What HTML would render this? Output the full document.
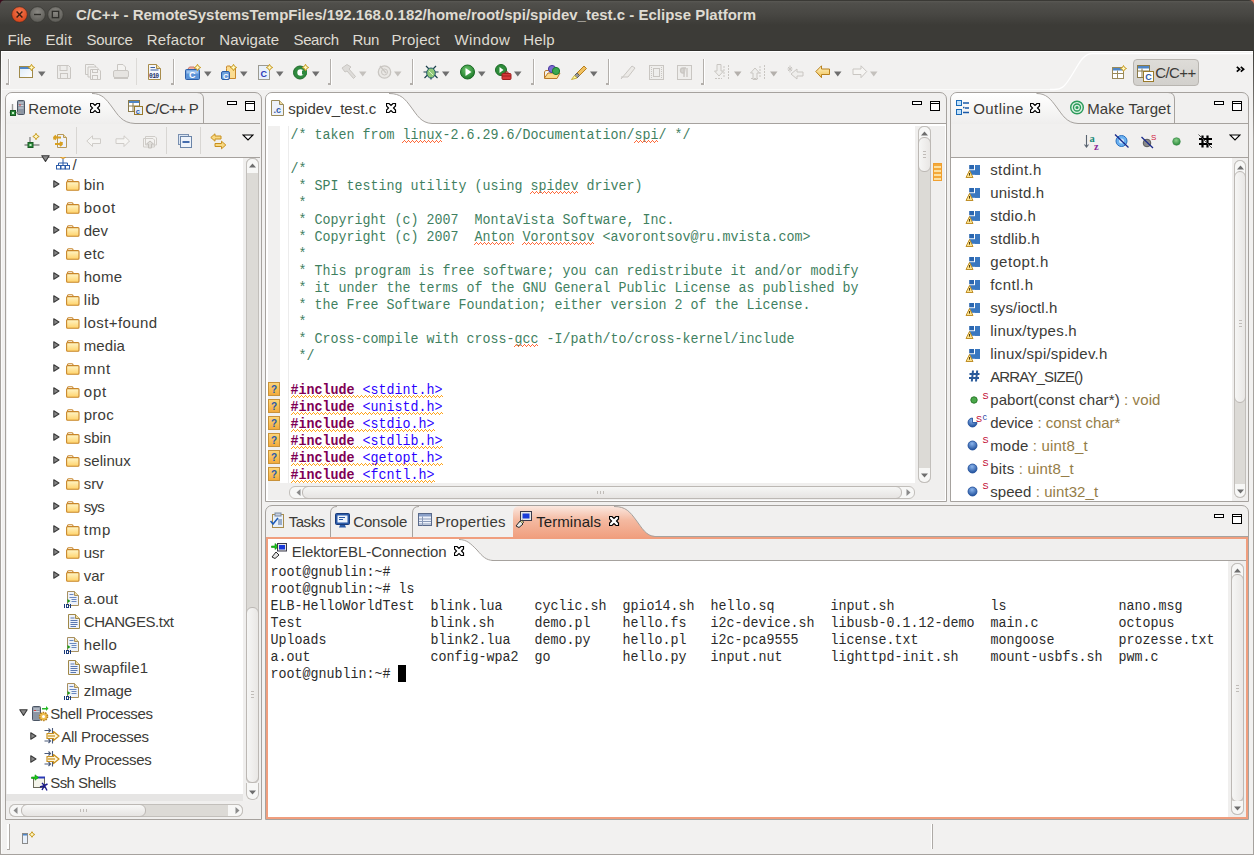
<!DOCTYPE html><html><head><meta charset="utf-8"><style>
*{margin:0;padding:0;box-sizing:border-box}
html,body{width:1254px;height:855px;overflow:hidden;background:#f2f1f0;font-family:"Liberation Sans",sans-serif;}
.t{position:absolute;white-space:pre;line-height:18px;font-size:15px;color:#3c3b37}
.m{position:absolute;white-space:pre;font-family:"Liberation Mono",monospace;font-size:13.33px;line-height:17px;transform:scaleY(1.1);transform-origin:0 12px}
</style></head><body><div style="position:absolute;left:0px;top:0px;width:8px;height:8px;background:#3a0c1c"></div>
<div style="position:absolute;left:1246px;top:0px;width:8px;height:8px;background:#e07a5e"></div>
<div style="position:absolute;left:0px;top:0px;width:1254px;height:25px;background:linear-gradient(#3a3935 0,#3a3935 1px,#5a5954 1px,#504f4b 3px,#484743 14px,#3c3b37 25px);border-radius:5px 5px 0 0"></div>
<div style="position:absolute;left:0px;top:25px;width:1254px;height:26px;background:#3c3b37"></div>
<div style="position:absolute;left:0px;top:50px;width:1254px;height:1px;background:#302f2c"></div>
<svg style="position:absolute;left:11px;top:6px;" width="18" height="18" viewBox="0 0 18 18"><defs><radialGradient id="rc" cx="50%" cy="35%" r="60%"><stop offset="0" stop-color="#f57a52"/><stop offset="1" stop-color="#d8461c"/></radialGradient></defs><circle cx="8.5" cy="8.5" r="7.8" fill="url(#rc)" stroke="#3a2a22" stroke-width="0.6"/><path d="M5.6 5.6L11.4 11.4M11.4 5.6L5.6 11.4" stroke="#3c1e10" stroke-width="1.4"/></svg>
<svg style="position:absolute;left:29px;top:6px;" width="18" height="18" viewBox="0 0 18 18"><defs><radialGradient id="gc" cx="50%" cy="35%" r="60%"><stop offset="0" stop-color="#8a8883"/><stop offset="1" stop-color="#5e5d58"/></radialGradient></defs><circle cx="8.5" cy="8.5" r="7.8" fill="url(#gc)" stroke="#33322e" stroke-width="0.6"/><path d="M5 8.5H12" stroke="#2f2e2a" stroke-width="1.4"/></svg>
<svg style="position:absolute;left:47px;top:6px;" width="18" height="18" viewBox="0 0 18 18"><circle cx="8.5" cy="8.5" r="7.8" fill="url(#gc)" stroke="#33322e" stroke-width="0.6"/><rect x="5.3" y="5.3" width="6.4" height="6.4" fill="none" stroke="#2f2e2a" stroke-width="1.3"/></svg>
<div class="t" style="left:76px;top:6px;font-weight:bold;color:#dfdbd2;font-size:15px">C/C++ - RemoteSystemsTempFiles/192.168.0.182/home/root/spi/spidev_test.c - Eclipse Platform</div>
<div class="t" style="left:7.6000000000000005px;top:31px;letter-spacing:-0.102px;color:#dfdbd2">File</div>
<div class="t" style="left:45.400000000000006px;top:31px;letter-spacing:0.188px;color:#dfdbd2">Edit</div>
<div class="t" style="left:86.5px;top:31px;letter-spacing:-0.242px;color:#dfdbd2">Source</div>
<div class="t" style="left:146.79999999999998px;top:31px;letter-spacing:0.199px;color:#dfdbd2">Refactor</div>
<div class="t" style="left:219.29999999999998px;top:31px;letter-spacing:0.076px;color:#dfdbd2">Navigate</div>
<div class="t" style="left:293.59999999999997px;top:31px;letter-spacing:-0.414px;color:#dfdbd2">Search</div>
<div class="t" style="left:352.59999999999997px;top:31px;letter-spacing:-0.349px;color:#dfdbd2">Run</div>
<div class="t" style="left:391.59999999999997px;top:31px;letter-spacing:0.217px;color:#dfdbd2">Project</div>
<div class="t" style="left:454.59999999999997px;top:31px;letter-spacing:0.370px;color:#dfdbd2">Window</div>
<div class="t" style="left:523.2px;top:31px;letter-spacing:0.152px;color:#dfdbd2">Help</div>
<div style="position:absolute;left:5px;top:92px;width:257px;height:728px;border:1px solid #a6a29e;border-radius:7px 7px 0 0;background:#f1f0ef"></div>
<svg style="position:absolute;left:6px;top:93px;" width="200" height="31" viewBox="0 0 200 31"><defs><linearGradient id="tabg" x1="0" y1="0" x2="0" y2="1"><stop offset="0" stop-color="#ffffff"/><stop offset="1" stop-color="#efeeed"/></linearGradient></defs><path d="M0 31 V7 Q0 0 7 0 H86 C96 0 100 6 106 14 C112 22 116 30 129 30 V31 Z" fill="url(#tabg)"/><path d="M86 0.5 C96 0.5 100 6 106 14 C112 22 116 30 129 30.5 H200" fill="none" stroke="#a6a29e" stroke-width="1"/></svg>
<svg style="position:absolute;left:193px;top:92px;" width="11" height="31" viewBox="0 0 11 31"><path d="M10.5 31 V7 Q10.5 0.5 4 0.5" fill="none" stroke="#a6a29e"/></svg>
<div style="position:absolute;left:200px;top:123px;width:60px;height:1px;background:#a6a29e"></div>
<div class="t" style="left:28.2px;top:99.7px;letter-spacing:0.154px;">Remote</div>
<div class="t" style="left:145.2px;top:99.7px;letter-spacing:-0.652px;">C/C++ P</div>
<div style="position:absolute;left:227px;top:101px;width:10px;height:4px;border:1.5px solid #000;background:#fff;border-radius:0"></div>
<div style="position:absolute;left:245px;top:101px;width:10px;height:10px;border:1.5px solid #000;background:#fff"></div>
<div style="position:absolute;left:246px;top:103.3px;width:8px;height:1.2px;background:#000"></div>
<div style="position:absolute;left:6px;top:157px;width:254px;height:1px;background:#a6a29e"></div>
<div style="position:absolute;left:7px;top:158px;width:236px;height:636px;background:#fff"></div>
<div style="position:absolute;left:243px;top:158px;width:16px;height:636px;background:#f0efee"></div>
<div style="position:absolute;left:246px;top:158px;width:13px;height:626px;background:#dcdad6;border:1px solid #c2bfbb;border-radius:6px"></div>
<div style="position:absolute;left:246px;top:158px;width:13px;height:15px;background:#f7f7f6;border:1px solid #c2bfbb;border-radius:6px 6px 0 0;border-bottom:none"></div>
<div style="position:absolute;left:246px;top:607px;width:13px;height:176px;background:linear-gradient(90deg,#f6f6f5,#e9e7e5);border:1px solid #bcb8b4;border-radius:6px"></div>
<div style="position:absolute;left:246px;top:783px;width:13px;height:17px;background:#f7f7f6;border:1px solid #c2bfbb;border-radius:0 0 6px 6px;border-top:none"></div>
<div style="position:absolute;left:6px;top:794px;width:237px;height:7px;background:#e6e5e4"></div>
<div style="position:absolute;left:6px;top:801px;width:254px;height:18px;background:#f0efee"></div>
<div style="position:absolute;left:9px;top:804px;width:234px;height:13px;background:#dcdad6;border:1px solid #c2bfbb;border-radius:6px"></div>
<div style="position:absolute;left:9px;top:804px;width:14px;height:13px;background:#f7f7f6;border:1px solid #c2bfbb;border-right:none;border-radius:6px 0 0 6px"></div>
<div style="position:absolute;left:228px;top:804px;width:15px;height:13px;background:#f7f7f6;border:1px solid #c2bfbb;border-left:none;border-radius:0 6px 6px 0"></div>
<div style="position:absolute;left:21px;top:804px;width:125px;height:13px;background:linear-gradient(#f8f8f7,#e6e4e2);border:1px solid #bcb8b4;border-radius:6px"></div>
<svg style="position:absolute;left:53px;top:180px;" width="7" height="8" viewBox="0 0 7 8"><path d="M0.8 0.8 L6 4 L0.8 7.2Z" fill="#8a8a8a" stroke="#3a3a3a" stroke-width="1.1" stroke-linejoin="round"/></svg>
<div class="t" style="left:83.7px;top:176px;letter-spacing:0.323px;">bin</div>
<svg style="position:absolute;left:53px;top:203px;" width="7" height="8" viewBox="0 0 7 8"><path d="M0.8 0.8 L6 4 L0.8 7.2Z" fill="#8a8a8a" stroke="#3a3a3a" stroke-width="1.1" stroke-linejoin="round"/></svg>
<div class="t" style="left:83.7px;top:199px;letter-spacing:0.758px;">boot</div>
<svg style="position:absolute;left:53px;top:226px;" width="7" height="8" viewBox="0 0 7 8"><path d="M0.8 0.8 L6 4 L0.8 7.2Z" fill="#8a8a8a" stroke="#3a3a3a" stroke-width="1.1" stroke-linejoin="round"/></svg>
<div class="t" style="left:83.7px;top:222px;letter-spacing:0.062px;">dev</div>
<svg style="position:absolute;left:53px;top:249px;" width="7" height="8" viewBox="0 0 7 8"><path d="M0.8 0.8 L6 4 L0.8 7.2Z" fill="#8a8a8a" stroke="#3a3a3a" stroke-width="1.1" stroke-linejoin="round"/></svg>
<div class="t" style="left:83.7px;top:245px;letter-spacing:0.365px;">etc</div>
<svg style="position:absolute;left:53px;top:272px;" width="7" height="8" viewBox="0 0 7 8"><path d="M0.8 0.8 L6 4 L0.8 7.2Z" fill="#8a8a8a" stroke="#3a3a3a" stroke-width="1.1" stroke-linejoin="round"/></svg>
<div class="t" style="left:83.7px;top:268px;letter-spacing:0.258px;">home</div>
<svg style="position:absolute;left:53px;top:295px;" width="7" height="8" viewBox="0 0 7 8"><path d="M0.8 0.8 L6 4 L0.8 7.2Z" fill="#8a8a8a" stroke="#3a3a3a" stroke-width="1.1" stroke-linejoin="round"/></svg>
<div class="t" style="left:83.7px;top:291px;letter-spacing:0.453px;">lib</div>
<svg style="position:absolute;left:53px;top:318px;" width="7" height="8" viewBox="0 0 7 8"><path d="M0.8 0.8 L6 4 L0.8 7.2Z" fill="#8a8a8a" stroke="#3a3a3a" stroke-width="1.1" stroke-linejoin="round"/></svg>
<div class="t" style="left:83.7px;top:314px;letter-spacing:0.431px;">lost+found</div>
<svg style="position:absolute;left:53px;top:341px;" width="7" height="8" viewBox="0 0 7 8"><path d="M0.8 0.8 L6 4 L0.8 7.2Z" fill="#8a8a8a" stroke="#3a3a3a" stroke-width="1.1" stroke-linejoin="round"/></svg>
<div class="t" style="left:83.7px;top:337px;letter-spacing:0.097px;">media</div>
<svg style="position:absolute;left:53px;top:364px;" width="7" height="8" viewBox="0 0 7 8"><path d="M0.8 0.8 L6 4 L0.8 7.2Z" fill="#8a8a8a" stroke="#3a3a3a" stroke-width="1.1" stroke-linejoin="round"/></svg>
<div class="t" style="left:83.7px;top:360px;letter-spacing:0.792px;">mnt</div>
<svg style="position:absolute;left:53px;top:387px;" width="7" height="8" viewBox="0 0 7 8"><path d="M0.8 0.8 L6 4 L0.8 7.2Z" fill="#8a8a8a" stroke="#3a3a3a" stroke-width="1.1" stroke-linejoin="round"/></svg>
<div class="t" style="left:83.7px;top:383px;letter-spacing:0.865px;">opt</div>
<svg style="position:absolute;left:53px;top:410px;" width="7" height="8" viewBox="0 0 7 8"><path d="M0.8 0.8 L6 4 L0.8 7.2Z" fill="#8a8a8a" stroke="#3a3a3a" stroke-width="1.1" stroke-linejoin="round"/></svg>
<div class="t" style="left:83.7px;top:406px;letter-spacing:0.254px;">proc</div>
<svg style="position:absolute;left:53px;top:433px;" width="7" height="8" viewBox="0 0 7 8"><path d="M0.8 0.8 L6 4 L0.8 7.2Z" fill="#8a8a8a" stroke="#3a3a3a" stroke-width="1.1" stroke-linejoin="round"/></svg>
<div class="t" style="left:83.7px;top:429px;letter-spacing:-0.004px;">sbin</div>
<svg style="position:absolute;left:53px;top:456px;" width="7" height="8" viewBox="0 0 7 8"><path d="M0.8 0.8 L6 4 L0.8 7.2Z" fill="#8a8a8a" stroke="#3a3a3a" stroke-width="1.1" stroke-linejoin="round"/></svg>
<div class="t" style="left:83.7px;top:452px;letter-spacing:0.056px;">selinux</div>
<svg style="position:absolute;left:53px;top:479px;" width="7" height="8" viewBox="0 0 7 8"><path d="M0.8 0.8 L6 4 L0.8 7.2Z" fill="#8a8a8a" stroke="#3a3a3a" stroke-width="1.1" stroke-linejoin="round"/></svg>
<div class="t" style="left:83.7px;top:475px;letter-spacing:-0.052px;">srv</div>
<svg style="position:absolute;left:53px;top:502px;" width="7" height="8" viewBox="0 0 7 8"><path d="M0.8 0.8 L6 4 L0.8 7.2Z" fill="#8a8a8a" stroke="#3a3a3a" stroke-width="1.1" stroke-linejoin="round"/></svg>
<div class="t" style="left:83.7px;top:498px;letter-spacing:-0.745px;">sys</div>
<svg style="position:absolute;left:53px;top:525px;" width="7" height="8" viewBox="0 0 7 8"><path d="M0.8 0.8 L6 4 L0.8 7.2Z" fill="#8a8a8a" stroke="#3a3a3a" stroke-width="1.1" stroke-linejoin="round"/></svg>
<div class="t" style="left:83.7px;top:521px;letter-spacing:0.865px;">tmp</div>
<svg style="position:absolute;left:53px;top:548px;" width="7" height="8" viewBox="0 0 7 8"><path d="M0.8 0.8 L6 4 L0.8 7.2Z" fill="#8a8a8a" stroke="#3a3a3a" stroke-width="1.1" stroke-linejoin="round"/></svg>
<div class="t" style="left:83.7px;top:544px;letter-spacing:-0.026px;">usr</div>
<svg style="position:absolute;left:53px;top:571px;" width="7" height="8" viewBox="0 0 7 8"><path d="M0.8 0.8 L6 4 L0.8 7.2Z" fill="#8a8a8a" stroke="#3a3a3a" stroke-width="1.1" stroke-linejoin="round"/></svg>
<div class="t" style="left:83.7px;top:567px;letter-spacing:-0.052px;">var</div>
<div class="t" style="left:83.7px;top:590px;letter-spacing:0.241px;">a.out</div>
<div class="t" style="left:83.7px;top:613px;letter-spacing:-0.395px;">CHANGES.txt</div>
<div class="t" style="left:83.7px;top:636px;letter-spacing:0.362px;">hello</div>
<div class="t" style="left:83.7px;top:659px;letter-spacing:0.236px;">swapfile1</div>
<div class="t" style="left:83.7px;top:682px;letter-spacing:-0.151px;">zImage</div>
<div class="t" style="left:50.2px;top:705px;letter-spacing:-0.339px;">Shell Processes</div>
<svg style="position:absolute;left:30px;top:732px;" width="7" height="8" viewBox="0 0 7 8"><path d="M0.8 0.8 L6 4 L0.8 7.2Z" fill="#8a8a8a" stroke="#3a3a3a" stroke-width="1.1" stroke-linejoin="round"/></svg>
<div class="t" style="left:61.2px;top:728px;letter-spacing:-0.257px;">All Processes</div>
<svg style="position:absolute;left:30px;top:755px;" width="7" height="8" viewBox="0 0 7 8"><path d="M0.8 0.8 L6 4 L0.8 7.2Z" fill="#8a8a8a" stroke="#3a3a3a" stroke-width="1.1" stroke-linejoin="round"/></svg>
<div class="t" style="left:61.2px;top:751px;letter-spacing:-0.337px;">My Processes</div>
<div class="t" style="left:50.2px;top:774px;letter-spacing:-0.539px;">Ssh Shells</div>
<svg style="position:absolute;left:41px;top:155px;" width="9" height="8" viewBox="0 0 9 8"><path d="M0.8 0.8 H8.2 L4.5 6.5Z" fill="#8a8a8a" stroke="#3a3a3a" stroke-width="1.1" stroke-linejoin="round"/></svg>
<div class="t" style="left:72.5px;top:156px;">/</div>
<div style="position:absolute;left:265px;top:92px;width:682px;height:410px;border:1px solid #a6a29e;border-radius:7px 7px 0 0;background:#f1f0ef"></div>
<svg style="position:absolute;left:266px;top:93px;" width="170" height="31" viewBox="0 0 170 31"><path d="M0 31 V7 Q0 0 7 0 H123 C135 0 139 6 145 14 C151 22 155 30 166 30 V31 Z" fill="#fff"/><path d="M123 0.5 C135 0.5 139 6 145 14 C151 22 155 30 166 30.5 H170" fill="none" stroke="#a6a29e" stroke-width="1"/></svg>
<div style="position:absolute;left:432px;top:123px;width:514px;height:1px;background:#a6a29e"></div>
<div class="t" style="left:288.2px;top:99.5px;letter-spacing:0.035px;">spidev_test.c</div>
<div style="position:absolute;left:912px;top:101px;width:10px;height:4px;border:1.5px solid #000;background:#fff;border-radius:0"></div>
<div style="position:absolute;left:930px;top:101px;width:10px;height:10px;border:1.5px solid #000;background:#fff"></div>
<div style="position:absolute;left:931px;top:103.3px;width:8px;height:1.2px;background:#000"></div>
<div style="position:absolute;left:266px;top:124px;width:680px;height:377px;background:#fff"></div>
<div style="position:absolute;left:915px;top:126px;width:30px;height:374px;background:#f0efee"></div>
<div style="position:absolute;left:268px;top:483px;width:647px;height:17px;background:#f0efee"></div>
<div style="position:absolute;left:268px;top:126px;width:12px;height:357px;background:#f1f0ef"></div>
<div style="position:absolute;left:288px;top:126px;width:1px;height:357px;background:#ececec"></div>
<div style="position:absolute;left:918px;top:126px;width:13px;height:357px;background:#dcdad6;border:1px solid #c2bfbb;border-radius:6px"></div>
<div style="position:absolute;left:918px;top:126px;width:13px;height:14px;background:#f7f7f6;border:1px solid #c2bfbb;border-radius:6px 6px 0 0;border-bottom:none"></div>
<div style="position:absolute;left:918px;top:137px;width:13px;height:35px;background:linear-gradient(90deg,#f6f6f5,#e9e7e5);border:1px solid #bcb8b4;border-radius:6px"></div>
<div style="position:absolute;left:918px;top:468px;width:13px;height:15px;background:#f7f7f6;border:1px solid #c2bfbb;border-radius:0 0 6px 6px;border-top:none"></div>
<div style="position:absolute;left:933px;top:163px;width:9px;height:18px;background:repeating-linear-gradient(#f4a93a 0 2px,#fde0a0 2px 4px);border:1px solid #f0a030"></div>
<div style="position:absolute;left:289px;top:486px;width:626px;height:13px;background:#f7f7f6;border:1px solid #c2bfbb;border-radius:6px"></div>
<div style="position:absolute;left:302px;top:486px;width:600px;height:13px;background:linear-gradient(#f6f6f5,#e6e4e2);border:1px solid #bcb8b4;border-radius:6px"></div>
<div style="position:absolute;left:950px;top:92px;width:299px;height:410px;border:1px solid #a6a29e;border-radius:7px 7px 0 0;background:#f1f0ef"></div>
<svg style="position:absolute;left:951px;top:93px;" width="150" height="31" viewBox="0 0 150 31"><path d="M0 31 V7 Q0 0 7 0 H85.5 C95.5 0 99.5 6 105.5 14 C111.5 22 115.5 30 127 30 V31 Z" fill="url(#tabg)"/><path d="M85.5 0.5 C95.5 0.5 99.5 6 105.5 14 C111.5 22 115.5 30 127 30.5 H150" fill="none" stroke="#a6a29e" stroke-width="1"/></svg>
<div style="position:absolute;left:1101px;top:123px;width:147px;height:1px;background:#a6a29e"></div>
<svg style="position:absolute;left:1164px;top:92px;" width="11" height="31" viewBox="0 0 11 31"><path d="M10.5 31 V7 Q10.5 0.5 4 0.5" fill="none" stroke="#a6a29e"/></svg>
<div class="t" style="left:973.2px;top:99.7px;letter-spacing:0.426px;">Outline</div>
<div class="t" style="left:1087.2px;top:99.7px;letter-spacing:0.129px;">Make Target</div>
<div style="position:absolute;left:1214px;top:101px;width:10px;height:4px;border:1.5px solid #000;background:#fff;border-radius:0"></div>
<div style="position:absolute;left:1232px;top:101px;width:10px;height:10px;border:1.5px solid #000;background:#fff"></div>
<div style="position:absolute;left:1233px;top:103.3px;width:8px;height:1.2px;background:#000"></div>
<div style="position:absolute;left:951px;top:157px;width:297px;height:1px;background:#a6a29e"></div>
<div style="position:absolute;left:951px;top:158px;width:281px;height:343px;background:#fff"></div>
<div style="position:absolute;left:1232px;top:158px;width:16px;height:343px;background:#f0efee"></div>
<div style="position:absolute;left:1234px;top:160px;width:12px;height:338px;background:#dcdad6;border:1px solid #c2bfbb;border-radius:6px"></div>
<div style="position:absolute;left:1234px;top:160px;width:12px;height:14px;background:#f7f7f6;border:1px solid #c2bfbb;border-radius:6px 6px 0 0;border-bottom:none"></div>
<div style="position:absolute;left:1234px;top:171px;width:12px;height:232px;background:linear-gradient(90deg,#f6f6f5,#e9e7e5);border:1px solid #bcb8b4;border-radius:6px"></div>
<div style="position:absolute;left:1234px;top:484px;width:12px;height:14px;background:#f7f7f6;border:1px solid #c2bfbb;border-radius:0 0 6px 6px;border-top:none"></div>
<div class="t" style="left:990.2px;top:160.5px;letter-spacing:0.414px;">stdint.h</div>
<div class="t" style="left:990.2px;top:183.5px;letter-spacing:0.203px;">unistd.h</div>
<div class="t" style="left:990.2px;top:206.5px;letter-spacing:0.225px;">stdio.h</div>
<div class="t" style="left:990.2px;top:229.5px;letter-spacing:0.273px;">stdlib.h</div>
<div class="t" style="left:990.2px;top:252.5px;letter-spacing:0.553px;">getopt.h</div>
<div class="t" style="left:990.2px;top:275.5px;letter-spacing:0.475px;">fcntl.h</div>
<div class="t" style="left:990.2px;top:298.5px;letter-spacing:0.132px;">sys/ioctl.h</div>
<div class="t" style="left:990.2px;top:321.5px;letter-spacing:0.262px;">linux/types.h</div>
<div class="t" style="left:990.2px;top:344.5px;letter-spacing:0.232px;">linux/spi/spidev.h</div>
<div class="t" style="left:990.2px;top:367.5px;letter-spacing:-0.835px;">ARRAY_SIZE()</div>
<div class="t" style="left:990.2px;top:390.5px;letter-spacing:0.106px;">pabort(const char*)<span style="color:#957d47"> : void</span></div>
<div class="t" style="left:990.2px;top:413.5px;letter-spacing:-0.041px;">device<span style="color:#957d47"> : const char*</span></div>
<div class="t" style="left:990.2px;top:436.5px;letter-spacing:0.186px;">mode<span style="color:#957d47"> : uint8_t</span></div>
<div class="t" style="left:990.2px;top:459.5px;letter-spacing:0.203px;">bits<span style="color:#957d47"> : uint8_t</span></div>
<div class="t" style="left:990.2px;top:482.5px;letter-spacing:0.077px;">speed<span style="color:#957d47"> : uint32_t</span></div>
<div style="position:absolute;left:265px;top:505px;width:984px;height:315px;border:1px solid #a6a29e;border-radius:7px 7px 0 0;background:#f1f0ef"></div>
<svg style="position:absolute;left:330px;top:506px;" width="10" height="31" viewBox="0 0 10 31"><path d="M0.5 31 V7 Q0.5 0.5 7 0.5" fill="none" stroke="#a6a29e"/></svg>
<svg style="position:absolute;left:412px;top:506px;" width="10" height="31" viewBox="0 0 10 31"><path d="M0.5 31 V7 Q0.5 0.5 7 0.5" fill="none" stroke="#a6a29e"/></svg>
<div class="t" style="left:288.7px;top:512.5px;letter-spacing:-0.453px;">Tasks</div>
<div class="t" style="left:353.2px;top:512.5px;letter-spacing:-0.143px;">Console</div>
<div class="t" style="left:435.2px;top:512.5px;letter-spacing:0.212px;">Properties</div>
<svg style="position:absolute;left:513px;top:506px;" width="142" height="32" viewBox="0 0 142 32"><defs><linearGradient id="otab" x1="0" y1="0" x2="0" y2="1"><stop offset="0" stop-color="#fbe8e0"/><stop offset="0.45" stop-color="#f4b9a0"/><stop offset="1" stop-color="#f09e7e"/></linearGradient></defs><path d="M0 32 V7 Q0 0 7 0 H101 C113 0 117 6 123 14 C129 22 133 30 142 30 V32 Z" fill="url(#otab)"/><path d="M101 0.5 C113 0.5 117 6 123 14 C129 22 133 30 142 30.5" fill="none" stroke="#a6a29e"/></svg>
<div style="position:absolute;left:655px;top:536px;width:593px;height:1px;background:#a6a29e"></div>
<div class="t" style="left:536.2px;top:512.5px;letter-spacing:0.078px;color:#1e1e1e">Terminals</div>
<div style="position:absolute;left:1214px;top:514px;width:10px;height:4px;border:1.5px solid #000;background:#fff;border-radius:0"></div>
<div style="position:absolute;left:1232px;top:514px;width:10px;height:10px;border:1.5px solid #000;background:#fff"></div>
<div style="position:absolute;left:1233px;top:516.3px;width:8px;height:1.2px;background:#000"></div>
<div style="position:absolute;left:266px;top:537px;width:982px;height:282px;background:#f0efee;border:2px solid #f09e7e;border-bottom-width:2px"></div>
<svg style="position:absolute;left:268px;top:539px;" width="240" height="22" viewBox="0 0 240 22"><path d="M0 22 V0 H191 C199 0 203 5 209 11 C215 18 218 21 225 21 V22Z" fill="#fff"/><path d="M191 0.5 C199 0.5 203 5 209 11 C215 18 218 21 225 21.5 H240" fill="none" stroke="#a6a29e"/></svg>
<div style="position:absolute;left:492px;top:560px;width:754px;height:1px;background:#a6a29e"></div>
<div class="t" style="left:291.7px;top:542.5px;letter-spacing:-0.049px;">ElektorEBL-Connection</div>
<div style="position:absolute;left:268px;top:561px;width:978px;height:256px;background:#fff"></div>
<div style="position:absolute;left:1228px;top:561px;width:18px;height:256px;background:#f0efee"></div>
<div style="position:absolute;left:1231px;top:563px;width:13px;height:252px;background:#dcdad6;border:1px solid #c2bfbb;border-radius:6px"></div>
<div style="position:absolute;left:1231px;top:563px;width:13px;height:14px;background:#f7f7f6;border:1px solid #c2bfbb;border-radius:6px 6px 0 0;border-bottom:none"></div>
<div style="position:absolute;left:1231px;top:574px;width:13px;height:228px;background:linear-gradient(90deg,#f6f6f5,#e9e7e5);border:1px solid #bcb8b4;border-radius:6px"></div>
<div style="position:absolute;left:1231px;top:801px;width:13px;height:14px;background:#f7f7f6;border:1px solid #c2bfbb;border-radius:0 0 6px 6px;border-top:none"></div>
<div class="m" style="left:270.6px;top:564px;color:#2a2a2a">root@gnublin:~#</div>
<div class="m" style="left:270.6px;top:581px;color:#2a2a2a">root@gnublin:~# ls</div>
<div class="m" style="left:270.6px;top:598px;color:#2a2a2a">ELB-HelloWorldTest  blink.lua    cyclic.sh  gpio14.sh  hello.sq       input.sh            ls              nano.msg</div>
<div class="m" style="left:270.6px;top:615px;color:#2a2a2a">Test                blink.sh     demo.pl    hello.fs   i2c-device.sh  libusb-0.1.12-demo  main.c          octopus</div>
<div class="m" style="left:270.6px;top:632px;color:#2a2a2a">Uploads             blink2.lua   demo.py    hello.pl   i2c-pca9555    license.txt         mongoose        prozesse.txt</div>
<div class="m" style="left:270.6px;top:649px;color:#2a2a2a">a.out               config-wpa2  go         hello.py   input.nut      lighttpd-init.sh    mount-usbfs.sh  pwm.c</div>
<div class="m" style="left:270.6px;top:666px;color:#2a2a2a">root@gnublin:~# </div>
<div style="position:absolute;left:398px;top:665px;width:8px;height:17px;background:#000"></div>
<div style="position:absolute;left:7px;top:824px;width:2px;height:25px;background:#fff"></div>
<div style="position:absolute;left:9px;top:824px;width:1px;height:25px;background:#aeaaa6"></div>
<div style="position:absolute;left:7px;top:849px;width:3px;height:1px;background:#aeaaa6"></div>
<div style="position:absolute;left:931px;top:824px;width:1px;height:25px;background:#fff"></div>
<div style="position:absolute;left:932px;top:824px;width:1px;height:25px;background:#aeaaa6"></div>
<div class="m" style="left:290.6px;top:127px;color:#3f7f5f">/* taken from linux-2.6.29.6/Documentation/spi/ */</div>
<div class="m" style="left:290.6px;top:161px;color:#3f7f5f">/*</div>
<div class="m" style="left:290.6px;top:178px;color:#3f7f5f"> * SPI testing utility (using spidev driver)</div>
<div class="m" style="left:290.6px;top:195px;color:#3f7f5f"> *</div>
<div class="m" style="left:290.6px;top:212px;color:#3f7f5f"> * Copyright (c) 2007  MontaVista Software, Inc.</div>
<div class="m" style="left:290.6px;top:229px;color:#3f7f5f"> * Copyright (c) 2007  Anton Vorontsov &lt;avorontsov@ru.mvista.com&gt;</div>
<div class="m" style="left:290.6px;top:246px;color:#3f7f5f"> *</div>
<div class="m" style="left:290.6px;top:263px;color:#3f7f5f"> * This program is free software; you can redistribute it and/or modify</div>
<div class="m" style="left:290.6px;top:280px;color:#3f7f5f"> * it under the terms of the GNU General Public License as published by</div>
<div class="m" style="left:290.6px;top:297px;color:#3f7f5f"> * the Free Software Foundation; either version 2 of the License.</div>
<div class="m" style="left:290.6px;top:314px;color:#3f7f5f"> *</div>
<div class="m" style="left:290.6px;top:331px;color:#3f7f5f"> * Cross-compile with cross-gcc -I/path/to/cross-kernel/include</div>
<div class="m" style="left:290.6px;top:348px;color:#3f7f5f"> */</div>
<div class="m" style="left:290.6px;top:382px;color:#2a00ff"><b style="color:#7f0055">#include</b> &lt;stdint.h&gt;</div>
<svg style="position:absolute;left:291px;top:395px;shape-rendering:crispEdges" width="152" height="3" viewBox="0 0 152 3"><defs><pattern id="sq1" width="4" height="3" patternUnits="userSpaceOnUse"><rect x="0" y="2" width="1" height="1" fill="#ffa318"/><rect x="1" y="1" width="1" height="1" fill="#ffa318"/><rect x="2" y="0" width="1" height="1" fill="#ffa318"/><rect x="3" y="1" width="1" height="1" fill="#ffa318"/></pattern></defs><rect width="152" height="3" fill="url(#sq1)"/></svg>
<div class="m" style="left:290.6px;top:399px;color:#2a00ff"><b style="color:#7f0055">#include</b> &lt;unistd.h&gt;</div>
<svg style="position:absolute;left:291px;top:412px;shape-rendering:crispEdges" width="152" height="3" viewBox="0 0 152 3"><defs><pattern id="sq2" width="4" height="3" patternUnits="userSpaceOnUse"><rect x="0" y="2" width="1" height="1" fill="#ffa318"/><rect x="1" y="1" width="1" height="1" fill="#ffa318"/><rect x="2" y="0" width="1" height="1" fill="#ffa318"/><rect x="3" y="1" width="1" height="1" fill="#ffa318"/></pattern></defs><rect width="152" height="3" fill="url(#sq2)"/></svg>
<div class="m" style="left:290.6px;top:416px;color:#2a00ff"><b style="color:#7f0055">#include</b> &lt;stdio.h&gt;</div>
<svg style="position:absolute;left:291px;top:429px;shape-rendering:crispEdges" width="144" height="3" viewBox="0 0 144 3"><defs><pattern id="sq3" width="4" height="3" patternUnits="userSpaceOnUse"><rect x="0" y="2" width="1" height="1" fill="#ffa318"/><rect x="1" y="1" width="1" height="1" fill="#ffa318"/><rect x="2" y="0" width="1" height="1" fill="#ffa318"/><rect x="3" y="1" width="1" height="1" fill="#ffa318"/></pattern></defs><rect width="144" height="3" fill="url(#sq3)"/></svg>
<div class="m" style="left:290.6px;top:433px;color:#2a00ff"><b style="color:#7f0055">#include</b> &lt;stdlib.h&gt;</div>
<svg style="position:absolute;left:291px;top:446px;shape-rendering:crispEdges" width="152" height="3" viewBox="0 0 152 3"><defs><pattern id="sq4" width="4" height="3" patternUnits="userSpaceOnUse"><rect x="0" y="2" width="1" height="1" fill="#ffa318"/><rect x="1" y="1" width="1" height="1" fill="#ffa318"/><rect x="2" y="0" width="1" height="1" fill="#ffa318"/><rect x="3" y="1" width="1" height="1" fill="#ffa318"/></pattern></defs><rect width="152" height="3" fill="url(#sq4)"/></svg>
<div class="m" style="left:290.6px;top:450px;color:#2a00ff"><b style="color:#7f0055">#include</b> &lt;getopt.h&gt;</div>
<svg style="position:absolute;left:291px;top:463px;shape-rendering:crispEdges" width="152" height="3" viewBox="0 0 152 3"><defs><pattern id="sq5" width="4" height="3" patternUnits="userSpaceOnUse"><rect x="0" y="2" width="1" height="1" fill="#ffa318"/><rect x="1" y="1" width="1" height="1" fill="#ffa318"/><rect x="2" y="0" width="1" height="1" fill="#ffa318"/><rect x="3" y="1" width="1" height="1" fill="#ffa318"/></pattern></defs><rect width="152" height="3" fill="url(#sq5)"/></svg>
<div class="m" style="left:290.6px;top:467px;color:#2a00ff"><b style="color:#7f0055">#include</b> &lt;fcntl.h&gt;</div>
<svg style="position:absolute;left:291px;top:480px;shape-rendering:crispEdges" width="144" height="3" viewBox="0 0 144 3"><defs><pattern id="sq6" width="4" height="3" patternUnits="userSpaceOnUse"><rect x="0" y="2" width="1" height="1" fill="#ffa318"/><rect x="1" y="1" width="1" height="1" fill="#ffa318"/><rect x="2" y="0" width="1" height="1" fill="#ffa318"/><rect x="3" y="1" width="1" height="1" fill="#ffa318"/></pattern></defs><rect width="144" height="3" fill="url(#sq6)"/></svg>
<svg style="position:absolute;left:402px;top:140px;shape-rendering:crispEdges" width="40" height="3" viewBox="0 0 40 3"><defs><pattern id="sq7" width="4" height="3" patternUnits="userSpaceOnUse"><rect x="0" y="2" width="1" height="1" fill="#ff6a3a"/><rect x="1" y="1" width="1" height="1" fill="#ff6a3a"/><rect x="2" y="0" width="1" height="1" fill="#ff6a3a"/><rect x="3" y="1" width="1" height="1" fill="#ff6a3a"/></pattern></defs><rect width="40" height="3" fill="url(#sq7)"/></svg>
<svg style="position:absolute;left:634px;top:140px;shape-rendering:crispEdges" width="24" height="3" viewBox="0 0 24 3"><defs><pattern id="sq8" width="4" height="3" patternUnits="userSpaceOnUse"><rect x="0" y="2" width="1" height="1" fill="#ff6a3a"/><rect x="1" y="1" width="1" height="1" fill="#ff6a3a"/><rect x="2" y="0" width="1" height="1" fill="#ff6a3a"/><rect x="3" y="1" width="1" height="1" fill="#ff6a3a"/></pattern></defs><rect width="24" height="3" fill="url(#sq8)"/></svg>
<svg style="position:absolute;left:530px;top:191px;shape-rendering:crispEdges" width="48" height="3" viewBox="0 0 48 3"><defs><pattern id="sq9" width="4" height="3" patternUnits="userSpaceOnUse"><rect x="0" y="2" width="1" height="1" fill="#ff6a3a"/><rect x="1" y="1" width="1" height="1" fill="#ff6a3a"/><rect x="2" y="0" width="1" height="1" fill="#ff6a3a"/><rect x="3" y="1" width="1" height="1" fill="#ff6a3a"/></pattern></defs><rect width="48" height="3" fill="url(#sq9)"/></svg>
<svg style="position:absolute;left:474px;top:242px;shape-rendering:crispEdges" width="40" height="3" viewBox="0 0 40 3"><defs><pattern id="sq10" width="4" height="3" patternUnits="userSpaceOnUse"><rect x="0" y="2" width="1" height="1" fill="#ff6a3a"/><rect x="1" y="1" width="1" height="1" fill="#ff6a3a"/><rect x="2" y="0" width="1" height="1" fill="#ff6a3a"/><rect x="3" y="1" width="1" height="1" fill="#ff6a3a"/></pattern></defs><rect width="40" height="3" fill="url(#sq10)"/></svg>
<svg style="position:absolute;left:522px;top:242px;shape-rendering:crispEdges" width="72" height="3" viewBox="0 0 72 3"><defs><pattern id="sq11" width="4" height="3" patternUnits="userSpaceOnUse"><rect x="0" y="2" width="1" height="1" fill="#ff6a3a"/><rect x="1" y="1" width="1" height="1" fill="#ff6a3a"/><rect x="2" y="0" width="1" height="1" fill="#ff6a3a"/><rect x="3" y="1" width="1" height="1" fill="#ff6a3a"/></pattern></defs><rect width="72" height="3" fill="url(#sq11)"/></svg>
<svg style="position:absolute;left:514px;top:344px;shape-rendering:crispEdges" width="24" height="3" viewBox="0 0 24 3"><defs><pattern id="sq12" width="4" height="3" patternUnits="userSpaceOnUse"><rect x="0" y="2" width="1" height="1" fill="#ff6a3a"/><rect x="1" y="1" width="1" height="1" fill="#ff6a3a"/><rect x="2" y="0" width="1" height="1" fill="#ff6a3a"/><rect x="3" y="1" width="1" height="1" fill="#ff6a3a"/></pattern></defs><rect width="24" height="3" fill="url(#sq12)"/></svg>
<svg style="position:absolute;left:268px;top:382px;" width="12" height="14" viewBox="0 0 12 14"><defs><linearGradient id="qm" x1="0" y1="0" x2="0" y2="1"><stop offset="0" stop-color="#fcd67a"/><stop offset="1" stop-color="#f2a93a"/></linearGradient></defs><rect x="0.5" y="0.5" width="11" height="13" fill="url(#qm)" stroke="#c8923a"/><text x="3" y="11" font-family="Liberation Sans" font-size="10" font-weight="bold" fill="#2a5aa8">?</text></svg>
<svg style="position:absolute;left:268px;top:399px;" width="12" height="14" viewBox="0 0 12 14"><defs><linearGradient id="qm" x1="0" y1="0" x2="0" y2="1"><stop offset="0" stop-color="#fcd67a"/><stop offset="1" stop-color="#f2a93a"/></linearGradient></defs><rect x="0.5" y="0.5" width="11" height="13" fill="url(#qm)" stroke="#c8923a"/><text x="3" y="11" font-family="Liberation Sans" font-size="10" font-weight="bold" fill="#2a5aa8">?</text></svg>
<svg style="position:absolute;left:268px;top:416px;" width="12" height="14" viewBox="0 0 12 14"><defs><linearGradient id="qm" x1="0" y1="0" x2="0" y2="1"><stop offset="0" stop-color="#fcd67a"/><stop offset="1" stop-color="#f2a93a"/></linearGradient></defs><rect x="0.5" y="0.5" width="11" height="13" fill="url(#qm)" stroke="#c8923a"/><text x="3" y="11" font-family="Liberation Sans" font-size="10" font-weight="bold" fill="#2a5aa8">?</text></svg>
<svg style="position:absolute;left:268px;top:433px;" width="12" height="14" viewBox="0 0 12 14"><defs><linearGradient id="qm" x1="0" y1="0" x2="0" y2="1"><stop offset="0" stop-color="#fcd67a"/><stop offset="1" stop-color="#f2a93a"/></linearGradient></defs><rect x="0.5" y="0.5" width="11" height="13" fill="url(#qm)" stroke="#c8923a"/><text x="3" y="11" font-family="Liberation Sans" font-size="10" font-weight="bold" fill="#2a5aa8">?</text></svg>
<svg style="position:absolute;left:268px;top:450px;" width="12" height="14" viewBox="0 0 12 14"><defs><linearGradient id="qm" x1="0" y1="0" x2="0" y2="1"><stop offset="0" stop-color="#fcd67a"/><stop offset="1" stop-color="#f2a93a"/></linearGradient></defs><rect x="0.5" y="0.5" width="11" height="13" fill="url(#qm)" stroke="#c8923a"/><text x="3" y="11" font-family="Liberation Sans" font-size="10" font-weight="bold" fill="#2a5aa8">?</text></svg>
<svg style="position:absolute;left:268px;top:467px;" width="12" height="14" viewBox="0 0 12 14"><defs><linearGradient id="qm" x1="0" y1="0" x2="0" y2="1"><stop offset="0" stop-color="#fcd67a"/><stop offset="1" stop-color="#f2a93a"/></linearGradient></defs><rect x="0.5" y="0.5" width="11" height="13" fill="url(#qm)" stroke="#c8923a"/><text x="3" y="11" font-family="Liberation Sans" font-size="10" font-weight="bold" fill="#2a5aa8">?</text></svg>
<div style="position:absolute;left:8px;top:59px;width:2px;height:26px;background:#b3afab;border-right:1px solid #fff"></div>
<div style="position:absolute;left:6px;top:83px;width:3px;height:2px;background:#b3afab"></div>
<svg style="position:absolute;left:19px;top:64px;" width="16" height="16" viewBox="0 0 16 16"><defs><linearGradient id="nw" x1="0" y1="0" x2="1" y2="1"><stop offset="0" stop-color="#dbeaf8"/><stop offset="1" stop-color="#ffffff"/></linearGradient></defs><rect x="0.5" y="2.5" width="13" height="11" fill="url(#nw)" stroke="#a08a4a"/><rect x="1" y="3" width="12" height="2" fill="#4f86c6"/><path d="M12.5 0.2999999999999998 L13.62 2.38 L15.7 3.5 L13.62 4.62 L12.5 6.7 L11.38 4.62 L9.3 3.5 L11.38 2.38Z" fill="#fff8c0" stroke="#c89a20" stroke-width="1"/></svg>
<svg style="position:absolute;left:38px;top:71px;" width="8" height="6" viewBox="0 0 8 6"><path d="M0 0.5 H7.5 L3.75 5.5Z" fill="#6e6e6e"/></svg>
<svg style="position:absolute;left:56px;top:64px;" width="16" height="16" viewBox="0 0 16 16"><path d="M1.5 1.5 H12.5 L14.5 3.5 V14.5 H1.5Z" fill="#eeedeb" stroke="#c9c6c2"/><rect x="4" y="1.5" width="7" height="5" fill="none" stroke="#c9c6c2"/><rect x="4.5" y="9.5" width="7" height="5" fill="none" stroke="#c9c6c2"/></svg>
<svg style="position:absolute;left:85px;top:64px;" width="16" height="16" viewBox="0 0 16 16"><path d="M0.5 0.5 H9 L10.5 2 V10.5 H0.5Z" fill="#f2f1ef" stroke="#c9c6c2"/><path d="M3.0 3.0 H11.5 L13.0 4.5 V13.0 H3.0Z" fill="#f2f1ef" stroke="#c9c6c2"/><path d="M5.5 5.5 H14 L15.5 7 V15.5 H5.5Z" fill="#f2f1ef" stroke="#c9c6c2"/><rect x="7.5" y="5.5" width="5" height="3" fill="none" stroke="#c9c6c2"/><rect x="7.5" y="11.5" width="5" height="4" fill="none" stroke="#c9c6c2"/></svg>
<svg style="position:absolute;left:113px;top:64px;" width="16" height="16" viewBox="0 0 16 16"><path d="M4.5 0.5 H10 L12.5 3 V7.5 H4.5Z" fill="#f4f3f1" stroke="#c9c6c2"/><rect x="0.5" y="6.5" width="15" height="7" rx="1.5" fill="#e6e4e1" stroke="#c9c6c2"/><rect x="1" y="13" width="14" height="2" fill="#c9c6c2"/></svg>
<div style="position:absolute;left:136px;top:58px;width:1px;height:27px;background:#dcdad7"></div>
<svg style="position:absolute;left:147px;top:64px;" width="16" height="16" viewBox="0 0 16 16"><path d="M1.5 0.5 H9.5 L13.5 4.5 V15.5 H1.5Z" fill="#f4f6fb" stroke="#a88c4c"/><path d="M9.5 0.5 V4.5 H13.5" fill="#f3dea0" stroke="#a88c4c"/><path d="M3.5 3.5 H8 M3.5 6 H11.5" stroke="#3a5fa0" stroke-width="1.1"/><text x="2" y="14" font-family="Liberation Mono" font-size="6.3" font-weight="bold" fill="#1a2f6a" letter-spacing="-0.6">010</text></svg>
<div style="position:absolute;left:173px;top:59px;width:2px;height:26px;background:#b3afab;border-right:1px solid #fff"></div>
<div style="position:absolute;left:171px;top:83px;width:3px;height:2px;background:#b3afab"></div>
<svg style="position:absolute;left:185px;top:64px;" width="17" height="16" viewBox="0 0 17 16"><path d="M3 5 L4.5 3 H9 L10 5" fill="#f4b0a0" stroke="#c8786a"/><rect x="0.5" y="5.5" width="14" height="10" rx="1" fill="#5d94d8" stroke="#2c5ea8"/><rect x="1.5" y="6.5" width="12" height="3" fill="#9cc2ee"/><text x="4" y="14.2" font-family="Liberation Sans" font-size="9" font-weight="bold" fill="#fff">C</text><path d="M12.5 0.2999999999999998 L13.62 2.38 L15.7 3.5 L13.62 4.62 L12.5 6.7 L11.38 4.62 L9.3 3.5 L11.38 2.38Z" fill="#fff8c0" stroke="#c89a20" stroke-width="1"/></svg>
<svg style="position:absolute;left:204px;top:71px;" width="8" height="6" viewBox="0 0 8 6"><path d="M0 0.5 H7.5 L3.75 5.5Z" fill="#6e6e6e"/></svg>
<svg style="position:absolute;left:221px;top:64px;" width="17" height="16" viewBox="0 0 17 16"><path d="M5.5 4.5 V3 Q5.5 2 6.5 2 H9 L10 3.5 H14.5 V14.5 H5.5Z" fill="#fbdc90" stroke="#c8862a"/><rect x="0.5" y="7.5" width="8" height="8" rx="1.5" fill="#6fa0dc" stroke="#2c5ea8"/><text x="2" y="14.5" font-family="Liberation Sans" font-size="7.5" font-weight="bold" fill="#fff">C</text><path d="M12.5 0.2999999999999998 L13.62 2.38 L15.7 3.5 L13.62 4.62 L12.5 6.7 L11.38 4.62 L9.3 3.5 L11.38 2.38Z" fill="#fff8c0" stroke="#c89a20" stroke-width="1"/></svg>
<svg style="position:absolute;left:240px;top:71px;" width="8" height="6" viewBox="0 0 8 6"><path d="M0 0.5 H7.5 L3.75 5.5Z" fill="#6e6e6e"/></svg>
<svg style="position:absolute;left:258px;top:64px;" width="16" height="16" viewBox="0 0 16 16"><rect x="0.5" y="1.5" width="11" height="14" fill="#e8f0fa" stroke="#9c9a90"/><text x="2.5" y="12.5" font-family="Liberation Sans" font-size="9" font-weight="bold" fill="#2838b8">C</text><path d="M11.5 0.2999999999999998 L12.62 2.38 L14.7 3.5 L12.62 4.62 L11.5 6.7 L10.38 4.62 L8.3 3.5 L10.38 2.38Z" fill="#fff8c0" stroke="#c89a20" stroke-width="1"/></svg>
<svg style="position:absolute;left:276px;top:71px;" width="8" height="6" viewBox="0 0 8 6"><path d="M0 0.5 H7.5 L3.75 5.5Z" fill="#6e6e6e"/></svg>
<svg style="position:absolute;left:293px;top:64px;" width="17" height="16" viewBox="0 0 17 16"><circle cx="7" cy="8.5" r="6.5" fill="#2f8a3e" stroke="#1f6a2a"/><circle cx="7.5" cy="8.5" r="3.2" fill="#fff"/><rect x="9" y="6.5" width="5" height="4" fill="#2f8a3e"/><path d="M12.5 0.2999999999999998 L13.62 2.38 L15.7 3.5 L13.62 4.62 L12.5 6.7 L11.38 4.62 L9.3 3.5 L11.38 2.38Z" fill="#fff8c0" stroke="#c89a20" stroke-width="1"/></svg>
<svg style="position:absolute;left:312px;top:71px;" width="8" height="6" viewBox="0 0 8 6"><path d="M0 0.5 H7.5 L3.75 5.5Z" fill="#6e6e6e"/></svg>
<div style="position:absolute;left:330px;top:59px;width:2px;height:26px;background:#b3afab;border-right:1px solid #fff"></div>
<div style="position:absolute;left:328px;top:83px;width:3px;height:2px;background:#b3afab"></div>
<svg style="position:absolute;left:341px;top:64px;" width="16" height="16" viewBox="0 0 16 16"><path d="M1 4 L6 0.5 L10 3 L8 5 L14.5 12.5 L12.5 14.5 L6 7 L4 8Z" fill="#dedcd9" stroke="#c9c6c2"/></svg>
<svg style="position:absolute;left:359px;top:71px;" width="8" height="6" viewBox="0 0 8 6"><path d="M0 0.5 H7.5 L3.75 5.5Z" fill="#c4c1bd"/></svg>
<svg style="position:absolute;left:377px;top:64px;" width="16" height="16" viewBox="0 0 16 16"><circle cx="7.5" cy="8" r="6.2" fill="#eae8e5" stroke="#c9c6c2" stroke-width="1.3"/><circle cx="7.5" cy="8" r="3" fill="none" stroke="#c9c6c2"/><path d="M3 2 L9 9" stroke="#c9c6c2" stroke-width="1.3"/></svg>
<svg style="position:absolute;left:394px;top:71px;" width="8" height="6" viewBox="0 0 8 6"><path d="M0 0.5 H7.5 L3.75 5.5Z" fill="#c4c1bd"/></svg>
<div style="position:absolute;left:412px;top:59px;width:2px;height:26px;background:#b3afab;border-right:1px solid #fff"></div>
<div style="position:absolute;left:410px;top:83px;width:3px;height:2px;background:#b3afab"></div>
<svg style="position:absolute;left:423px;top:64px;" width="16" height="16" viewBox="0 0 16 16"><path d="M3 2 L6 5 M13 2 L10 5 M0.5 8 H4 M15.5 8 H12 M1.5 14 L4.5 11 M14.5 14 L11.5 11 M8 15.5 V12" stroke="#1a3e4a" stroke-width="1.2"/><ellipse cx="8" cy="9" rx="4.3" ry="5" fill="#8fc878" stroke="#1f5a6a"/><path d="M6 7 L10 11" stroke="#d8f0c8"/></svg>
<svg style="position:absolute;left:442px;top:71px;" width="8" height="6" viewBox="0 0 8 6"><path d="M0 0.5 H7.5 L3.75 5.5Z" fill="#6e6e6e"/></svg>
<svg style="position:absolute;left:460px;top:64px;" width="16" height="16" viewBox="0 0 16 16"><defs><radialGradient id="rg" cx="45%" cy="35%" r="65%"><stop offset="0" stop-color="#6cc66c"/><stop offset="1" stop-color="#1e7a2a"/></radialGradient></defs><circle cx="7.5" cy="8" r="7" fill="url(#rg)" stroke="#1a6a24"/><path d="M5.5 4 V12 L11.5 8Z" fill="#fff"/></svg>
<svg style="position:absolute;left:478px;top:71px;" width="8" height="6" viewBox="0 0 8 6"><path d="M0 0.5 H7.5 L3.75 5.5Z" fill="#6e6e6e"/></svg>
<svg style="position:absolute;left:495px;top:64px;" width="17" height="16" viewBox="0 0 17 16"><circle cx="6" cy="6" r="5.5" fill="#2e8c3a" stroke="#1a6a24"/><path d="M4.5 3 V9 L8.5 6Z" fill="#fff"/><rect x="7" y="9.5" width="9" height="6" rx="1" fill="#d83a3a" stroke="#a02020"/><path d="M10 9.5 V8 H13 V9.5 M7 12 H16" stroke="#a02020" fill="none"/></svg>
<svg style="position:absolute;left:514px;top:71px;" width="8" height="6" viewBox="0 0 8 6"><path d="M0 0.5 H7.5 L3.75 5.5Z" fill="#6e6e6e"/></svg>
<div style="position:absolute;left:533px;top:59px;width:2px;height:26px;background:#b3afab;border-right:1px solid #fff"></div>
<div style="position:absolute;left:531px;top:83px;width:3px;height:2px;background:#b3afab"></div>
<svg style="position:absolute;left:544px;top:64px;" width="17" height="16" viewBox="0 0 17 16"><path d="M0.5 8 V14.5 H13 L16 9 H4 L0.5 14" fill="#fbd98a" stroke="#b8782a"/><path d="M0.5 8 L1.5 6.5 H5 L6 8 H12" fill="none" stroke="#b8782a"/><circle cx="8" cy="5" r="3.6" fill="#7a6ad0" stroke="#4a3aa0"/><circle cx="12" cy="7" r="3.6" fill="#3aa850" stroke="#1a7a30"/></svg>
<svg style="position:absolute;left:571px;top:64px;" width="17" height="16" viewBox="0 0 17 16"><path d="M6 9 L13 2 L15.5 4.5 L8.5 11.5Z" fill="#f0c060" stroke="#b88020"/><path d="M3.5 11.5 L6 9 L8.5 11.5 L6 14Z" fill="#9a9a9a" stroke="#606060"/><path d="M0.5 15.5 L3.5 11.5 L6 14Z" fill="#fffaa0" stroke="#c8b040"/></svg>
<svg style="position:absolute;left:590px;top:71px;" width="8" height="6" viewBox="0 0 8 6"><path d="M0 0.5 H7.5 L3.75 5.5Z" fill="#6e6e6e"/></svg>
<div style="position:absolute;left:608px;top:59px;width:2px;height:26px;background:#b3afab;border-right:1px solid #fff"></div>
<div style="position:absolute;left:606px;top:83px;width:3px;height:2px;background:#b3afab"></div>
<svg style="position:absolute;left:620px;top:64px;" width="16" height="16" viewBox="0 0 16 16"><path d="M1 15 L12 2 L15 4 L8 13 H1" fill="#eceae7" stroke="#c9c6c2"/></svg>
<svg style="position:absolute;left:649px;top:64px;" width="16" height="16" viewBox="0 0 16 16"><rect x="0.5" y="1.5" width="14" height="14" fill="#efeeec" stroke="#c9c6c2"/><rect x="4.5" y="4.5" width="6" height="8" fill="none" stroke="#c9c6c2"/><path d="M2.5 3 V14 M12.5 3 V14" stroke="#c9c6c2" stroke-dasharray="1 1"/></svg>
<svg style="position:absolute;left:677px;top:64px;" width="16" height="16" viewBox="0 0 16 16"><rect x="0.5" y="1.5" width="14" height="14" fill="#efeeec" stroke="#c9c6c2"/><path d="M9 4 H6 Q3.5 4 3.5 6.5 Q3.5 9 6 9 H7 V13 M7 4 V13 M10 4 V13" fill="#d5d3d0" stroke="#c9c6c2" stroke-width="1.3"/></svg>
<div style="position:absolute;left:703px;top:59px;width:2px;height:26px;background:#b3afab;border-right:1px solid #fff"></div>
<div style="position:absolute;left:701px;top:83px;width:3px;height:2px;background:#b3afab"></div>
<svg style="position:absolute;left:714px;top:64px;" width="16" height="16" viewBox="0 0 16 16"><path d="M3 0.5 H7 V7 H9.5 L5 12 L0.5 7 H3Z" fill="#efeeec" stroke="#c9c6c2"/><path d="M9 3 H12 M9 6 H12 M9 9 H12 M9 12 H12 M14.5 1 V15 M1 14.5 H8" stroke="#c9c6c2" stroke-dasharray="2 1"/></svg>
<svg style="position:absolute;left:734px;top:71px;" width="8" height="6" viewBox="0 0 8 6"><path d="M0 0.5 H7.5 L3.75 5.5Z" fill="#b4b0ac"/></svg>
<svg style="position:absolute;left:750px;top:64px;" width="16" height="16" viewBox="0 0 16 16"><path d="M3 15.5 H7 V9 H9.5 L5 4 L0.5 9 H3Z" fill="#efeeec" stroke="#c9c6c2"/><path d="M9 3 H12 M9 6 H12 M9 9 H12 M9 12 H12 M14.5 1 V15 M1 14.5 H8" stroke="#c9c6c2" stroke-dasharray="2 1"/></svg>
<svg style="position:absolute;left:770px;top:71px;" width="8" height="6" viewBox="0 0 8 6"><path d="M0 0.5 H7.5 L3.75 5.5Z" fill="#b4b0ac"/></svg>
<svg style="position:absolute;left:787px;top:64px;" width="17" height="16" viewBox="0 0 17 16"><path d="M1 3 L5 7 M5 3 L1 7 M3 1.5 V8.5 M0.5 5 H5.5" stroke="#c9c6c2"/><path d="M16 8 V12 H10 V15 L4 10 L10 5 V8Z" fill="#efeeec" stroke="#c9c6c2"/></svg>
<svg style="position:absolute;left:815px;top:65px;" width="16" height="14" viewBox="0 0 16 14"><defs><linearGradient id="bk" x1="0" y1="0" x2="0" y2="1"><stop offset="0" stop-color="#fff4c8"/><stop offset="1" stop-color="#f0c050"/></linearGradient></defs><path d="M0.8 6.5 L6.5 0.8 V4 H14.5 V9.5 H6.5 V12.7Z" fill="url(#bk)" stroke="#b8801e" stroke-linejoin="round"/></svg>
<svg style="position:absolute;left:834px;top:71px;" width="8" height="6" viewBox="0 0 8 6"><path d="M0 0.5 H7.5 L3.75 5.5Z" fill="#6e6e6e"/></svg>
<svg style="position:absolute;left:852px;top:65px;" width="16" height="14" viewBox="0 0 16 14"><path d="M14.7 6.5 L9 0.8 V4 H1 V9.5 H9 V12.7Z" fill="#f6f5f3" stroke="#c9c6c2" stroke-linejoin="round"/></svg>
<svg style="position:absolute;left:870px;top:71px;" width="8" height="6" viewBox="0 0 8 6"><path d="M0 0.5 H7.5 L3.75 5.5Z" fill="#c4c1bd"/></svg>
<div style="position:absolute;left:1px;top:89px;width:1053px;height:1px;background:#fafaf9"></div>
<svg style="position:absolute;left:1050px;top:52px;" width="204" height="40" viewBox="0 0 204 40"><path d="M0 37.5 H4 C12 37.5 15 34 20 26 C26 17 29 10 33 6 C36 3 38 1.5 42 1.5 H204" fill="none" stroke="#ffffff" stroke-width="1.3"/></svg>
<svg style="position:absolute;left:1112px;top:65px;" width="15" height="15" viewBox="0 0 15 15"><rect x="0.5" y="2.5" width="11" height="11" fill="#fff" stroke="#9a8a5a"/><rect x="1" y="3" width="10" height="2.5" fill="#4f86c6"/><path d="M0.5 8.5 H11.5 M5.5 5.5 V13.5" stroke="#9a8a5a"/><path d="M11.5 0.5 L12.55 2.45 L14.5 3.5 L12.55 4.55 L11.5 6.5 L10.45 4.55 L8.5 3.5 L10.45 2.45Z" fill="#fff8c0" stroke="#c89a20" stroke-width="1"/></svg>
<div style="position:absolute;left:1133px;top:59px;width:66px;height:27px;background:linear-gradient(#dedcd8,#d2d0cc);border:1px solid #b8b5b0;border-radius:4px"></div>
<svg style="position:absolute;left:1137px;top:65px;" width="18" height="17" viewBox="0 0 18 17"><rect x="0.5" y="0.5" width="12" height="12" fill="#fff" stroke="#8a7a4a"/><rect x="1" y="1" width="11" height="2.5" fill="#4f86c6"/><path d="M0.5 6 H12 M5 3.5 V12.5" stroke="#8a7a4a"/><rect x="6.5" y="6.5" width="10" height="10" fill="#fff" stroke="#9a7a2a"/><text x="8.3" y="15.3" font-family="Liberation Sans" font-size="9" font-weight="bold" fill="#2e5aa8">C</text></svg>
<div class="t" style="left:1155.2px;top:64px;letter-spacing:-0.559px;font-size:15px">C/C++</div>
<svg style="position:absolute;left:1236px;top:65.5px;" width="9" height="7" viewBox="0 0 9 7"><path d="M0.8 0.8 L3.6 3.2 L0.8 5.6 M4.8 0.8 L7.6 3.2 L4.8 5.6" fill="none" stroke="#000" stroke-width="1.7"/></svg>
<svg style="position:absolute;left:9px;top:100px;" width="17" height="16" viewBox="0 0 17 16"><rect x="8.5" y="0.5" width="7" height="14" rx="1" fill="#8c96a4" stroke="#4c5664"/><path d="M9.5 3 H14.5 M9.5 5.5 H14.5 M9.5 8 H14.5" stroke="#d0d6de"/><rect x="10" y="4.5" width="2" height="1" fill="#d84040"/><path d="M3.5 4 V12 M0.5 12.5 H12" stroke="#9a9a9a" stroke-width="1.4"/><rect x="1.5" y="10.5" width="5" height="5" fill="#2a8a3a" stroke="#1a5a24"/><rect x="3" y="12" width="2" height="2" fill="#c8f0c8"/></svg>
<svg style="position:absolute;left:90px;top:103px;" width="11" height="11" viewBox="0 0 11 11"><path d="M0.5 0.5 H3 L5 2.5 L7 0.5 H9.5 V3 L7.5 5 L9.5 7 V9.5 H7 L5 7.5 L3 9.5 H0.5 V7 L2.5 5 L0.5 3 Z" fill="#fff" stroke="#000" stroke-width="1.2"/></svg>
<svg style="position:absolute;left:128px;top:100px;" width="16" height="16" viewBox="0 0 16 16"><rect x="0.5" y="0.5" width="11" height="11" fill="#fff" stroke="#8a7a4a"/><rect x="1" y="1" width="10" height="2" fill="#4f86c6"/><path d="M0.5 6 H11 M5 3 V11.5" stroke="#8a7a4a"/><rect x="6.5" y="6.5" width="8" height="8" fill="#e8f0fa" stroke="#9a7a2a"/><text x="7.8" y="13.6" font-family="Liberation Sans" font-size="7.5" font-weight="bold" fill="#2e5aa8">c</text></svg>
<div style="position:absolute;left:227px;top:101px;width:10px;height:4px;border:1.5px solid #000;background:#fff;border-radius:0"></div>
<div style="position:absolute;left:245px;top:101px;width:10px;height:10px;border:1.5px solid #000;background:#fff"></div>
<div style="position:absolute;left:246px;top:103.3px;width:8px;height:1.2px;background:#000"></div>
<svg style="position:absolute;left:24px;top:133px;" width="17" height="15" viewBox="0 0 17 15"><path d="M6 4 V13 M0.5 12 H15.5" stroke="#8a8a8a" stroke-width="1.4"/><rect x="4" y="9.5" width="5" height="5" fill="#2a8a3a" stroke="#1a5a24"/><rect x="5.5" y="11" width="2" height="2" fill="#c8f0c8"/><path d="M12 0.2999999999999998 L13.12 2.38 L15.2 3.5 L13.12 4.62 L12 6.7 L10.88 4.62 L8.8 3.5 L10.88 2.38Z" fill="#fff8c0" stroke="#c89a20" stroke-width="1"/></svg>
<svg style="position:absolute;left:52px;top:133px;" width="16" height="16" viewBox="0 0 16 16"><path d="M5.5 1.5 H11.5 L14.5 4.5 V14.5 H5.5Z" fill="#eef2fa" stroke="#b89a5a"/><path d="M11.5 1.5 V4.5 H14.5" fill="#f0dca0" stroke="#b89a5a"/><path d="M9 4.5 H4.5 Q2 4.5 2 6.5 M4 2.5 L2 4.5 L4 6.5" fill="none" stroke="#d8a020" stroke-width="1.8" stroke-linejoin="round"/><path d="M3 11 H7.5 Q10 11 10 9 M8 13 L10 11 L8 9" fill="none" stroke="#d8a020" stroke-width="1.8" stroke-linejoin="round"/></svg>
<div style="position:absolute;left:76px;top:127px;width:1px;height:27px;background:#d8d6d3"></div>
<svg style="position:absolute;left:86px;top:135px;" width="16" height="13" viewBox="0 0 16 13"><path d="M0.8 6 L6.5 0.8 V3.8 H14.5 V8.5 H6.5 V11.5Z" fill="#f6f5f3" stroke="#cfccc8" stroke-linejoin="round"/></svg>
<svg style="position:absolute;left:115px;top:135px;" width="16" height="13" viewBox="0 0 16 13"><path d="M14.5 6 L9 0.8 V3.8 H1 V8.5 H9 V11.5Z" fill="#f6f5f3" stroke="#cfccc8" stroke-linejoin="round"/></svg>
<svg style="position:absolute;left:143px;top:134px;" width="15" height="15" viewBox="0 0 15 15"><path d="M2.5 2.5 H12 L13.5 4 V11 H2.5Z M0.5 4.5 H10 L11.5 6 V13 H0.5Z" fill="#f3f2f0" stroke="#cfccc8"/><path d="M7 7 L10.5 10 H8.5 V14 H5.5 V10 H3.5Z" fill="#e0deda" stroke="#c4c1bd"/></svg>
<div style="position:absolute;left:166px;top:127px;width:1px;height:27px;background:#d8d6d3"></div>
<svg style="position:absolute;left:178px;top:134px;" width="14" height="15" viewBox="0 0 14 15"><rect x="0.5" y="0.5" width="10" height="10" fill="#dbe6f4" stroke="#7a90b0"/><rect x="2.5" y="2.5" width="11" height="11" fill="#eef3fa" stroke="#6a84a8"/><path d="M4.5 8 H11.5" stroke="#1a4a9a" stroke-width="1.6"/></svg>
<div style="position:absolute;left:200px;top:127px;width:1px;height:27px;background:#d8d6d3"></div>
<svg style="position:absolute;left:210px;top:133px;" width="17" height="17" viewBox="0 0 17 17"><path d="M0.8 4.5 L5 0.8 V3 H11 V6 H5 V8.2Z" fill="#f8d880" stroke="#c8901e" stroke-linejoin="round"/><path d="M15.8 12 L11.5 8.2 V10.5 H5 V13.5 H11.5 V15.8Z" fill="#f8d880" stroke="#c8901e" stroke-linejoin="round"/></svg>
<svg style="position:absolute;left:241.5px;top:133.5px;" width="12" height="7" viewBox="0 0 12 7"><path d="M1 1 H11 L6 6Z" fill="#fff" stroke="#000" stroke-width="1.1" stroke-linejoin="miter"/></svg>
<svg style="position:absolute;left:271px;top:100px;" width="13" height="16" viewBox="0 0 13 16"><path d="M0.5 0.5 H8.5 L12.5 4.5 V15.5 H0.5Z" fill="#eef2fa" stroke="#9a8a5a"/><path d="M8.5 0.5 V4.5 H12.5" fill="#f0dca0" stroke="#9a8a5a"/><text x="2.5" y="13" font-family="Liberation Sans" font-size="9" font-weight="bold" fill="#2e5aa8">.c</text></svg>
<svg style="position:absolute;left:386px;top:103px;" width="11" height="11" viewBox="0 0 11 11"><path d="M0.5 0.5 H3 L5 2.5 L7 0.5 H9.5 V3 L7.5 5 L9.5 7 V9.5 H7 L5 7.5 L3 9.5 H0.5 V7 L2.5 5 L0.5 3 Z" fill="#fff" stroke="#000" stroke-width="1.2"/></svg>
<svg style="position:absolute;left:956px;top:100px;" width="14" height="15" viewBox="0 0 14 15"><rect x="0.5" y="0.5" width="5" height="5" fill="#bfe0fa" stroke="#1a6ab8"/><rect x="0.5" y="9.5" width="5" height="5" fill="#bfe0fa" stroke="#1a6ab8"/><path d="M7 3 H13 M9 8 H13 M7 12.5 H13" stroke="#1a5aa8" stroke-width="1.3"/><rect x="7" y="6.8" width="1.5" height="1.5" fill="#1a5aa8"/></svg>
<svg style="position:absolute;left:1030px;top:103px;" width="11" height="11" viewBox="0 0 11 11"><path d="M0.5 0.5 H3 L5 2.5 L7 0.5 H9.5 V3 L7.5 5 L9.5 7 V9.5 H7 L5 7.5 L3 9.5 H0.5 V7 L2.5 5 L0.5 3 Z" fill="#fff" stroke="#000" stroke-width="1.2"/></svg>
<svg style="position:absolute;left:1070px;top:100px;" width="15" height="15" viewBox="0 0 15 15"><circle cx="7" cy="7.5" r="6.3" fill="#d8f0e0" stroke="#2a9a5a" stroke-width="1.4"/><circle cx="7" cy="7.5" r="3.5" fill="none" stroke="#2a9a5a" stroke-width="1.3"/><circle cx="7" cy="7.5" r="1.5" fill="#2a9a5a"/></svg>
<svg style="position:absolute;left:1084px;top:133px;" width="20" height="18" viewBox="0 0 20 18"><path d="M2.5 2 V14 M0.5 11.5 L2.5 14 L4.5 11.5" fill="none" stroke="#5a6470" stroke-width="1.1"/><text x="5.5" y="8.5" font-family="Liberation Serif" font-size="10.5" font-weight="bold" fill="#1a8a78">a</text><text x="10" y="16.5" font-family="Liberation Serif" font-size="10.5" font-weight="bold" fill="#8a2a9a">z</text></svg>
<svg style="position:absolute;left:1114px;top:133px;" width="16" height="16" viewBox="0 0 16 16"><circle cx="7.5" cy="8" r="5.5" fill="#6ab0f0" stroke="#2a70c0"/><circle cx="7.5" cy="8" r="2.5" fill="#cfe8fc"/><path d="M1 1.5 L14.5 14.5" stroke="#1a2a8a" stroke-width="1.3"/></svg>
<svg style="position:absolute;left:1141px;top:133px;" width="16" height="16" viewBox="0 0 16 16"><circle cx="6" cy="10" r="3.8" fill="#8a8a8a" stroke="#5a5a5a"/><path d="M0.5 4 L12 15" stroke="#1a2a8a" stroke-width="1.3"/><text x="10" y="7" font-family="Liberation Sans" font-size="8" fill="#d01840">S</text></svg>
<svg style="position:absolute;left:1172px;top:137px;" width="9" height="9" viewBox="0 0 9 9"><defs><radialGradient id="gd" cx="45%" cy="35%" r="65%"><stop offset="0" stop-color="#8ad08a"/><stop offset="1" stop-color="#2a8a3a"/></radialGradient></defs><circle cx="4.5" cy="4.5" r="3.8" fill="url(#gd)" stroke="#3a8a4a" stroke-width="0.6"/></svg>
<svg style="position:absolute;left:1198px;top:134px;" width="15" height="15" viewBox="0 0 15 15"><path d="M4.5 1.5 V13.5 M9.5 1.5 V13.5 M1 5 H14 M1 10 H14" stroke="#000" stroke-width="2.2"/><path d="M0.5 0.5 L14 14" stroke="#555" stroke-width="1"/></svg>
<svg style="position:absolute;left:1229px;top:133.5px;" width="12" height="7" viewBox="0 0 12 7"><path d="M1 1 H11 L6 6Z" fill="#fff" stroke="#000" stroke-width="1.1" stroke-linejoin="miter"/></svg>
<div style="position:absolute;left:1214px;top:101px;width:10px;height:4px;border:1.5px solid #000;background:#fff;border-radius:0"></div>
<div style="position:absolute;left:1232px;top:101px;width:10px;height:10px;border:1.5px solid #000;background:#fff"></div>
<div style="position:absolute;left:1233px;top:103.3px;width:8px;height:1.2px;background:#000"></div>
<svg style="position:absolute;left:270px;top:512px;" width="16" height="16" viewBox="0 0 16 16"><rect x="2.5" y="2.5" width="11" height="13" fill="#e8f0fa" stroke="#a88c4c"/><rect x="5" y="1" width="6" height="3" fill="#c8d0e0" stroke="#7a8aa0"/><path d="M0.5 9 L3 12 L8 6" fill="none" stroke="#1a5ab8" stroke-width="1.5"/><path d="M8 8 H12 M8 10 H12 M8 12 H12" stroke="#4a6a9a"/></svg>
<svg style="position:absolute;left:335px;top:513px;" width="15" height="15" viewBox="0 0 15 15"><rect x="0.5" y="0.5" width="14" height="11" rx="1" fill="#2a5aa8" stroke="#1a3a78"/><rect x="2.5" y="2.5" width="10" height="7" fill="#eef4fc"/><path d="M4 4.5 H10 M4 6.5 H8" stroke="#2a5aa8"/><path d="M5 12 H10 L11 14.5 H4Z" fill="#2a5aa8"/></svg>
<svg style="position:absolute;left:418px;top:513px;" width="15" height="13" viewBox="0 0 15 13"><rect x="0.5" y="0.5" width="13" height="12" fill="#eef2fa" stroke="#5a6a8a"/><rect x="1" y="1" width="12" height="2.5" fill="#8aa0c8"/><path d="M1 6 H13 M1 8.5 H13 M1 11 H13 M4.5 3.5 V12.5" stroke="#8a9ab8"/></svg>
<svg style="position:absolute;left:515px;top:511px;" width="18" height="17" viewBox="0 0 18 17"><rect x="5.5" y="0.5" width="11" height="9" fill="#e6e6e6" stroke="#3a3a4a"/><rect x="7.5" y="2.5" width="7" height="5" fill="#1a3ad8"/><path d="M1 15 L5 10 L8 13 L4 16.5Z" fill="#e8e8e8" stroke="#2a2a2a"/><path d="M4.5 11 L7.5 9 L8.5 12" fill="#f0f0a0" stroke="#3a3a3a"/></svg>
<svg style="position:absolute;left:609px;top:516px;" width="11" height="11" viewBox="0 0 11 11"><path d="M0.5 0.5 H3 L5 2.5 L7 0.5 H9.5 V3 L7.5 5 L9.5 7 V9.5 H7 L5 7.5 L3 9.5 H0.5 V7 L2.5 5 L0.5 3 Z" fill="#fff" stroke="#000" stroke-width="1.2"/></svg>
<svg style="position:absolute;left:271px;top:542px;" width="18" height="17" viewBox="0 0 18 17"><path d="M0.5 4 H4 V1.5 L7.5 4.5 L4 7.5 V5.5 H0.5Z" fill="#18c818" stroke="#0a8a0a" stroke-width="0.6"/><rect x="6.5" y="1.5" width="9" height="7.5" fill="#e6e6e6" stroke="#3a3a4a"/><rect x="8" y="3" width="6" height="4.5" fill="#1a3ad8"/><path d="M1 15 L5 10 L8 13 L4 16.5Z" fill="#e8e8e8" stroke="#2a2a2a"/></svg>
<svg style="position:absolute;left:454px;top:546px;" width="11" height="11" viewBox="0 0 11 11"><path d="M0.5 0.5 H3 L5 2.5 L7 0.5 H9.5 V3 L7.5 5 L9.5 7 V9.5 H7 L5 7.5 L3 9.5 H0.5 V7 L2.5 5 L0.5 3 Z" fill="#fff" stroke="#000" stroke-width="1.2"/></svg>
<svg style="position:absolute;left:65.5px;top:178.5px;" width="14" height="12" viewBox="0 0 14 12"><defs><linearGradient id="fg" x1="0" y1="0" x2="0" y2="1"><stop offset="0" stop-color="#fff6c8"/><stop offset="1" stop-color="#ffd26a"/></linearGradient></defs><path d="M1.5 3 V1.8 Q1.5 0.8 2.5 0.8 H6 Q7 0.8 7 1.8 V2.5" fill="#fff" stroke="#c8862a" stroke-width="1.1"/><rect x="0.6" y="2.6" width="12.4" height="8.6" rx="1" fill="url(#fg)" stroke="#c8862a" stroke-width="1.1"/></svg>
<svg style="position:absolute;left:65.5px;top:201.5px;" width="14" height="12" viewBox="0 0 14 12"><defs><linearGradient id="fg" x1="0" y1="0" x2="0" y2="1"><stop offset="0" stop-color="#fff6c8"/><stop offset="1" stop-color="#ffd26a"/></linearGradient></defs><path d="M1.5 3 V1.8 Q1.5 0.8 2.5 0.8 H6 Q7 0.8 7 1.8 V2.5" fill="#fff" stroke="#c8862a" stroke-width="1.1"/><rect x="0.6" y="2.6" width="12.4" height="8.6" rx="1" fill="url(#fg)" stroke="#c8862a" stroke-width="1.1"/></svg>
<svg style="position:absolute;left:65.5px;top:224.5px;" width="14" height="12" viewBox="0 0 14 12"><defs><linearGradient id="fg" x1="0" y1="0" x2="0" y2="1"><stop offset="0" stop-color="#fff6c8"/><stop offset="1" stop-color="#ffd26a"/></linearGradient></defs><path d="M1.5 3 V1.8 Q1.5 0.8 2.5 0.8 H6 Q7 0.8 7 1.8 V2.5" fill="#fff" stroke="#c8862a" stroke-width="1.1"/><rect x="0.6" y="2.6" width="12.4" height="8.6" rx="1" fill="url(#fg)" stroke="#c8862a" stroke-width="1.1"/></svg>
<svg style="position:absolute;left:65.5px;top:247.5px;" width="14" height="12" viewBox="0 0 14 12"><defs><linearGradient id="fg" x1="0" y1="0" x2="0" y2="1"><stop offset="0" stop-color="#fff6c8"/><stop offset="1" stop-color="#ffd26a"/></linearGradient></defs><path d="M1.5 3 V1.8 Q1.5 0.8 2.5 0.8 H6 Q7 0.8 7 1.8 V2.5" fill="#fff" stroke="#c8862a" stroke-width="1.1"/><rect x="0.6" y="2.6" width="12.4" height="8.6" rx="1" fill="url(#fg)" stroke="#c8862a" stroke-width="1.1"/></svg>
<svg style="position:absolute;left:65.5px;top:270.5px;" width="14" height="12" viewBox="0 0 14 12"><defs><linearGradient id="fg" x1="0" y1="0" x2="0" y2="1"><stop offset="0" stop-color="#fff6c8"/><stop offset="1" stop-color="#ffd26a"/></linearGradient></defs><path d="M1.5 3 V1.8 Q1.5 0.8 2.5 0.8 H6 Q7 0.8 7 1.8 V2.5" fill="#fff" stroke="#c8862a" stroke-width="1.1"/><rect x="0.6" y="2.6" width="12.4" height="8.6" rx="1" fill="url(#fg)" stroke="#c8862a" stroke-width="1.1"/></svg>
<svg style="position:absolute;left:65.5px;top:293.5px;" width="14" height="12" viewBox="0 0 14 12"><defs><linearGradient id="fg" x1="0" y1="0" x2="0" y2="1"><stop offset="0" stop-color="#fff6c8"/><stop offset="1" stop-color="#ffd26a"/></linearGradient></defs><path d="M1.5 3 V1.8 Q1.5 0.8 2.5 0.8 H6 Q7 0.8 7 1.8 V2.5" fill="#fff" stroke="#c8862a" stroke-width="1.1"/><rect x="0.6" y="2.6" width="12.4" height="8.6" rx="1" fill="url(#fg)" stroke="#c8862a" stroke-width="1.1"/></svg>
<svg style="position:absolute;left:65.5px;top:316.5px;" width="14" height="12" viewBox="0 0 14 12"><defs><linearGradient id="fg" x1="0" y1="0" x2="0" y2="1"><stop offset="0" stop-color="#fff6c8"/><stop offset="1" stop-color="#ffd26a"/></linearGradient></defs><path d="M1.5 3 V1.8 Q1.5 0.8 2.5 0.8 H6 Q7 0.8 7 1.8 V2.5" fill="#fff" stroke="#c8862a" stroke-width="1.1"/><rect x="0.6" y="2.6" width="12.4" height="8.6" rx="1" fill="url(#fg)" stroke="#c8862a" stroke-width="1.1"/></svg>
<svg style="position:absolute;left:65.5px;top:339.5px;" width="14" height="12" viewBox="0 0 14 12"><defs><linearGradient id="fg" x1="0" y1="0" x2="0" y2="1"><stop offset="0" stop-color="#fff6c8"/><stop offset="1" stop-color="#ffd26a"/></linearGradient></defs><path d="M1.5 3 V1.8 Q1.5 0.8 2.5 0.8 H6 Q7 0.8 7 1.8 V2.5" fill="#fff" stroke="#c8862a" stroke-width="1.1"/><rect x="0.6" y="2.6" width="12.4" height="8.6" rx="1" fill="url(#fg)" stroke="#c8862a" stroke-width="1.1"/></svg>
<svg style="position:absolute;left:65.5px;top:362.5px;" width="14" height="12" viewBox="0 0 14 12"><defs><linearGradient id="fg" x1="0" y1="0" x2="0" y2="1"><stop offset="0" stop-color="#fff6c8"/><stop offset="1" stop-color="#ffd26a"/></linearGradient></defs><path d="M1.5 3 V1.8 Q1.5 0.8 2.5 0.8 H6 Q7 0.8 7 1.8 V2.5" fill="#fff" stroke="#c8862a" stroke-width="1.1"/><rect x="0.6" y="2.6" width="12.4" height="8.6" rx="1" fill="url(#fg)" stroke="#c8862a" stroke-width="1.1"/></svg>
<svg style="position:absolute;left:65.5px;top:385.5px;" width="14" height="12" viewBox="0 0 14 12"><defs><linearGradient id="fg" x1="0" y1="0" x2="0" y2="1"><stop offset="0" stop-color="#fff6c8"/><stop offset="1" stop-color="#ffd26a"/></linearGradient></defs><path d="M1.5 3 V1.8 Q1.5 0.8 2.5 0.8 H6 Q7 0.8 7 1.8 V2.5" fill="#fff" stroke="#c8862a" stroke-width="1.1"/><rect x="0.6" y="2.6" width="12.4" height="8.6" rx="1" fill="url(#fg)" stroke="#c8862a" stroke-width="1.1"/></svg>
<svg style="position:absolute;left:65.5px;top:408.5px;" width="14" height="12" viewBox="0 0 14 12"><defs><linearGradient id="fg" x1="0" y1="0" x2="0" y2="1"><stop offset="0" stop-color="#fff6c8"/><stop offset="1" stop-color="#ffd26a"/></linearGradient></defs><path d="M1.5 3 V1.8 Q1.5 0.8 2.5 0.8 H6 Q7 0.8 7 1.8 V2.5" fill="#fff" stroke="#c8862a" stroke-width="1.1"/><rect x="0.6" y="2.6" width="12.4" height="8.6" rx="1" fill="url(#fg)" stroke="#c8862a" stroke-width="1.1"/></svg>
<svg style="position:absolute;left:65.5px;top:431.5px;" width="14" height="12" viewBox="0 0 14 12"><defs><linearGradient id="fg" x1="0" y1="0" x2="0" y2="1"><stop offset="0" stop-color="#fff6c8"/><stop offset="1" stop-color="#ffd26a"/></linearGradient></defs><path d="M1.5 3 V1.8 Q1.5 0.8 2.5 0.8 H6 Q7 0.8 7 1.8 V2.5" fill="#fff" stroke="#c8862a" stroke-width="1.1"/><rect x="0.6" y="2.6" width="12.4" height="8.6" rx="1" fill="url(#fg)" stroke="#c8862a" stroke-width="1.1"/></svg>
<svg style="position:absolute;left:65.5px;top:454.5px;" width="14" height="12" viewBox="0 0 14 12"><defs><linearGradient id="fg" x1="0" y1="0" x2="0" y2="1"><stop offset="0" stop-color="#fff6c8"/><stop offset="1" stop-color="#ffd26a"/></linearGradient></defs><path d="M1.5 3 V1.8 Q1.5 0.8 2.5 0.8 H6 Q7 0.8 7 1.8 V2.5" fill="#fff" stroke="#c8862a" stroke-width="1.1"/><rect x="0.6" y="2.6" width="12.4" height="8.6" rx="1" fill="url(#fg)" stroke="#c8862a" stroke-width="1.1"/></svg>
<svg style="position:absolute;left:65.5px;top:477.5px;" width="14" height="12" viewBox="0 0 14 12"><defs><linearGradient id="fg" x1="0" y1="0" x2="0" y2="1"><stop offset="0" stop-color="#fff6c8"/><stop offset="1" stop-color="#ffd26a"/></linearGradient></defs><path d="M1.5 3 V1.8 Q1.5 0.8 2.5 0.8 H6 Q7 0.8 7 1.8 V2.5" fill="#fff" stroke="#c8862a" stroke-width="1.1"/><rect x="0.6" y="2.6" width="12.4" height="8.6" rx="1" fill="url(#fg)" stroke="#c8862a" stroke-width="1.1"/></svg>
<svg style="position:absolute;left:65.5px;top:500.5px;" width="14" height="12" viewBox="0 0 14 12"><defs><linearGradient id="fg" x1="0" y1="0" x2="0" y2="1"><stop offset="0" stop-color="#fff6c8"/><stop offset="1" stop-color="#ffd26a"/></linearGradient></defs><path d="M1.5 3 V1.8 Q1.5 0.8 2.5 0.8 H6 Q7 0.8 7 1.8 V2.5" fill="#fff" stroke="#c8862a" stroke-width="1.1"/><rect x="0.6" y="2.6" width="12.4" height="8.6" rx="1" fill="url(#fg)" stroke="#c8862a" stroke-width="1.1"/></svg>
<svg style="position:absolute;left:65.5px;top:523.5px;" width="14" height="12" viewBox="0 0 14 12"><defs><linearGradient id="fg" x1="0" y1="0" x2="0" y2="1"><stop offset="0" stop-color="#fff6c8"/><stop offset="1" stop-color="#ffd26a"/></linearGradient></defs><path d="M1.5 3 V1.8 Q1.5 0.8 2.5 0.8 H6 Q7 0.8 7 1.8 V2.5" fill="#fff" stroke="#c8862a" stroke-width="1.1"/><rect x="0.6" y="2.6" width="12.4" height="8.6" rx="1" fill="url(#fg)" stroke="#c8862a" stroke-width="1.1"/></svg>
<svg style="position:absolute;left:65.5px;top:546.5px;" width="14" height="12" viewBox="0 0 14 12"><defs><linearGradient id="fg" x1="0" y1="0" x2="0" y2="1"><stop offset="0" stop-color="#fff6c8"/><stop offset="1" stop-color="#ffd26a"/></linearGradient></defs><path d="M1.5 3 V1.8 Q1.5 0.8 2.5 0.8 H6 Q7 0.8 7 1.8 V2.5" fill="#fff" stroke="#c8862a" stroke-width="1.1"/><rect x="0.6" y="2.6" width="12.4" height="8.6" rx="1" fill="url(#fg)" stroke="#c8862a" stroke-width="1.1"/></svg>
<svg style="position:absolute;left:65.5px;top:569.5px;" width="14" height="12" viewBox="0 0 14 12"><defs><linearGradient id="fg" x1="0" y1="0" x2="0" y2="1"><stop offset="0" stop-color="#fff6c8"/><stop offset="1" stop-color="#ffd26a"/></linearGradient></defs><path d="M1.5 3 V1.8 Q1.5 0.8 2.5 0.8 H6 Q7 0.8 7 1.8 V2.5" fill="#fff" stroke="#c8862a" stroke-width="1.1"/><rect x="0.6" y="2.6" width="12.4" height="8.6" rx="1" fill="url(#fg)" stroke="#c8862a" stroke-width="1.1"/></svg>
<svg style="position:absolute;left:64px;top:591px;" width="16" height="17" viewBox="0 0 16 17"><path d="M3.5 0.5 H10.5 L14.5 4.5 V14.5 H3.5Z" fill="#eef2fa" stroke="#a89060"/><path d="M10.5 0.5 V4.5 H14.5" fill="#f0dca0" stroke="#a89060"/><path d="M5.5 3.5 H9.5 M5.5 6.5 H12.5 M7.5 8.5 H12.5 M7.5 10.5 H12.5" stroke="#6a88c0"/><path d="M3.5 8 L6.5 10 L3.5 12Z" fill="#1a9a1a"/><g fill="#1a3a7a" shape-rendering="crispEdges"><rect x="0" y="13" width="1" height="4"/><rect x="2" y="13" width="3" height="4"/><rect x="6" y="13" width="1" height="4"/></g><rect x="3" y="14" width="1" height="2" fill="#fff" shape-rendering="crispEdges"/></svg>
<svg style="position:absolute;left:67.5px;top:613.5px;" width="12" height="15" viewBox="0 0 12 15"><path d="M0.5 0.5 H7.5 L11.5 4.5 V14.5 H0.5Z" fill="#eef2fa" stroke="#a08848"/><path d="M7.5 0.5 V4.5 H11.5" fill="#f0dca0" stroke="#a08848"/><path d="M2.5 4 H6.5 M2.5 6.5 H9.5 M2.5 8.5 H9.5 M2.5 10.5 H9.5 M2.5 12.5 H8" stroke="#5a78b0"/></svg>
<svg style="position:absolute;left:64px;top:637px;" width="16" height="17" viewBox="0 0 16 17"><path d="M3.5 0.5 H10.5 L14.5 4.5 V14.5 H3.5Z" fill="#eef2fa" stroke="#a89060"/><path d="M10.5 0.5 V4.5 H14.5" fill="#f0dca0" stroke="#a89060"/><path d="M5.5 3.5 H9.5 M5.5 6.5 H12.5 M7.5 8.5 H12.5 M7.5 10.5 H12.5" stroke="#6a88c0"/><path d="M3.5 8 L6.5 10 L3.5 12Z" fill="#1a9a1a"/><g fill="#1a3a7a" shape-rendering="crispEdges"><rect x="0" y="13" width="1" height="4"/><rect x="2" y="13" width="3" height="4"/><rect x="6" y="13" width="1" height="4"/></g><rect x="3" y="14" width="1" height="2" fill="#fff" shape-rendering="crispEdges"/></svg>
<svg style="position:absolute;left:67.5px;top:659.5px;" width="12" height="15" viewBox="0 0 12 15"><path d="M0.5 0.5 H7.5 L11.5 4.5 V14.5 H0.5Z" fill="#eef2fa" stroke="#a08848"/><path d="M7.5 0.5 V4.5 H11.5" fill="#f0dca0" stroke="#a08848"/><path d="M2.5 4 H6.5 M2.5 6.5 H9.5 M2.5 8.5 H9.5 M2.5 10.5 H9.5 M2.5 12.5 H8" stroke="#5a78b0"/></svg>
<svg style="position:absolute;left:64px;top:683px;" width="16" height="17" viewBox="0 0 16 17"><path d="M3.5 0.5 H10.5 L14.5 4.5 V14.5 H3.5Z" fill="#eef2fa" stroke="#a89060"/><path d="M10.5 0.5 V4.5 H14.5" fill="#f0dca0" stroke="#a89060"/><path d="M5.5 3.5 H9.5 M5.5 6.5 H12.5 M7.5 8.5 H12.5 M7.5 10.5 H12.5" stroke="#6a88c0"/><path d="M3.5 8 L6.5 10 L3.5 12Z" fill="#1a9a1a"/><g fill="#1a3a7a" shape-rendering="crispEdges"><rect x="0" y="13" width="1" height="4"/><rect x="2" y="13" width="3" height="4"/><rect x="6" y="13" width="1" height="4"/></g><rect x="3" y="14" width="1" height="2" fill="#fff" shape-rendering="crispEdges"/></svg>
<svg style="position:absolute;left:55.5px;top:157px;" width="16" height="13" viewBox="0 0 16 13"><path d="M4 0 Q7 3 10 0" fill="#f8c860" stroke="#c88a2a"/><path d="M7 2 V6 M2.5 6 H11.5 M2.5 6 V9 M7 6 V9 M11.5 6 V9" stroke="#2a5aa8"/><rect x="0.5" y="8.5" width="4" height="3.5" fill="#fff" stroke="#2a5aa8"/><rect x="5" y="8.5" width="4" height="3.5" fill="#fff" stroke="#2a5aa8"/><rect x="9.5" y="8.5" width="4" height="3.5" fill="#fff" stroke="#2a5aa8"/></svg>
<svg style="position:absolute;left:32px;top:705px;" width="17" height="17" viewBox="0 0 17 17"><rect x="0.5" y="1.5" width="8" height="14" rx="1" fill="#8c96a4" stroke="#4c5664"/><path d="M1.5 4 H7.5 M1.5 6.5 H7.5" stroke="#d0d6de"/><rect x="2" y="5" width="2" height="1" fill="#d84040"/><path d="M10 3 H14 V1 L16.5 3.5 L14 6 V4.5 H10Z" fill="#28b828"/><circle cx="11.5" cy="11.5" r="4" fill="#f0c050" stroke="#b8801e" stroke-width="1.6" stroke-dasharray="1.5 1"/><circle cx="11.5" cy="11.5" r="1.5" fill="#fff"/></svg>
<svg style="position:absolute;left:19px;top:708.5px;" width="9" height="8" viewBox="0 0 9 8"><path d="M0.8 0.8 H8.2 L4.5 6.5Z" fill="#8a8a8a" stroke="#3a3a3a" stroke-width="1.1" stroke-linejoin="round"/></svg>
<svg style="position:absolute;left:44px;top:728px;" width="16" height="16" viewBox="0 0 16 16"><path d="M0.5 2.5 H6.5 M4.5 0.5 L6.5 2.5 L4.5 4.5 M8.5 0 V5 M0.5 13 H6.5 M4.5 11 L6.5 13 L4.5 15 M8.5 10.5 V15.5" fill="none" stroke="#4a5a7a" stroke-width="1.1"/><path d="M3 5.5 H9.5 V3.5 L15 8 L9.5 12.5 V10.5 H3Z" fill="#fff6d8" stroke="#c8901e" stroke-width="1.2" stroke-linejoin="round"/><path d="M4 8 H11" stroke="#c8901e" stroke-width="1.2"/></svg>
<svg style="position:absolute;left:44px;top:751px;" width="16" height="16" viewBox="0 0 16 16"><path d="M0.5 2.5 H6.5 M4.5 0.5 L6.5 2.5 L4.5 4.5 M8.5 0 V5 M0.5 13 H6.5 M4.5 11 L6.5 13 L4.5 15 M8.5 10.5 V15.5" fill="none" stroke="#4a5a7a" stroke-width="1.1"/><path d="M3 5.5 H9.5 V3.5 L15 8 L9.5 12.5 V10.5 H3Z" fill="#fff6d8" stroke="#c8901e" stroke-width="1.2" stroke-linejoin="round"/><path d="M4 8 H11" stroke="#c8901e" stroke-width="1.2"/></svg>
<svg style="position:absolute;left:31px;top:774px;" width="18" height="17" viewBox="0 0 18 17"><rect x="2.5" y="3.5" width="11" height="10" fill="#f4f4ea" stroke="#6a6a5a"/><rect x="5" y="2.5" width="9" height="2" fill="#2a3ab8"/><path d="M0.5 3 H4 V0.8 L7.5 3.5 L4 6.2 V4.5 H0.5Z" fill="#18d018" stroke="#0a8a0a" stroke-width="0.6"/><path d="M11 9 L13.5 11.5 L11 16 M13.5 11.5 L16.5 10 M9 13 L13.5 11.5 L16 16.5" fill="none" stroke="#1a1a8a" stroke-width="1.4"/></svg>
<svg style="position:absolute;left:965px;top:164px;" width="16" height="15" viewBox="0 0 16 15"><rect x="4.2" y="1" width="4.8" height="4.3" fill="#2a66b0"/><rect x="10" y="1" width="5" height="9.8" fill="#3a78c0"/><rect x="4.2" y="6.2" width="10.8" height="4.6" fill="#3a78c0"/><path d="M4.5 6.5 L8 13.5 H1Z" fill="#fbe08a" stroke="#c0902a" stroke-linejoin="round"/><rect x="4.1" y="9" width="0.9" height="2.6" fill="#3a2a00"/></svg>
<svg style="position:absolute;left:965px;top:187px;" width="16" height="15" viewBox="0 0 16 15"><rect x="4.2" y="1" width="4.8" height="4.3" fill="#2a66b0"/><rect x="10" y="1" width="5" height="9.8" fill="#3a78c0"/><rect x="4.2" y="6.2" width="10.8" height="4.6" fill="#3a78c0"/><path d="M4.5 6.5 L8 13.5 H1Z" fill="#fbe08a" stroke="#c0902a" stroke-linejoin="round"/><rect x="4.1" y="9" width="0.9" height="2.6" fill="#3a2a00"/></svg>
<svg style="position:absolute;left:965px;top:210px;" width="16" height="15" viewBox="0 0 16 15"><rect x="4.2" y="1" width="4.8" height="4.3" fill="#2a66b0"/><rect x="10" y="1" width="5" height="9.8" fill="#3a78c0"/><rect x="4.2" y="6.2" width="10.8" height="4.6" fill="#3a78c0"/><path d="M4.5 6.5 L8 13.5 H1Z" fill="#fbe08a" stroke="#c0902a" stroke-linejoin="round"/><rect x="4.1" y="9" width="0.9" height="2.6" fill="#3a2a00"/></svg>
<svg style="position:absolute;left:965px;top:233px;" width="16" height="15" viewBox="0 0 16 15"><rect x="4.2" y="1" width="4.8" height="4.3" fill="#2a66b0"/><rect x="10" y="1" width="5" height="9.8" fill="#3a78c0"/><rect x="4.2" y="6.2" width="10.8" height="4.6" fill="#3a78c0"/><path d="M4.5 6.5 L8 13.5 H1Z" fill="#fbe08a" stroke="#c0902a" stroke-linejoin="round"/><rect x="4.1" y="9" width="0.9" height="2.6" fill="#3a2a00"/></svg>
<svg style="position:absolute;left:965px;top:256px;" width="16" height="15" viewBox="0 0 16 15"><rect x="4.2" y="1" width="4.8" height="4.3" fill="#2a66b0"/><rect x="10" y="1" width="5" height="9.8" fill="#3a78c0"/><rect x="4.2" y="6.2" width="10.8" height="4.6" fill="#3a78c0"/><path d="M4.5 6.5 L8 13.5 H1Z" fill="#fbe08a" stroke="#c0902a" stroke-linejoin="round"/><rect x="4.1" y="9" width="0.9" height="2.6" fill="#3a2a00"/></svg>
<svg style="position:absolute;left:965px;top:279px;" width="16" height="15" viewBox="0 0 16 15"><rect x="4.2" y="1" width="4.8" height="4.3" fill="#2a66b0"/><rect x="10" y="1" width="5" height="9.8" fill="#3a78c0"/><rect x="4.2" y="6.2" width="10.8" height="4.6" fill="#3a78c0"/><path d="M4.5 6.5 L8 13.5 H1Z" fill="#fbe08a" stroke="#c0902a" stroke-linejoin="round"/><rect x="4.1" y="9" width="0.9" height="2.6" fill="#3a2a00"/></svg>
<svg style="position:absolute;left:965px;top:302px;" width="16" height="15" viewBox="0 0 16 15"><rect x="4.2" y="1" width="4.8" height="4.3" fill="#2a66b0"/><rect x="10" y="1" width="5" height="9.8" fill="#3a78c0"/><rect x="4.2" y="6.2" width="10.8" height="4.6" fill="#3a78c0"/><path d="M4.5 6.5 L8 13.5 H1Z" fill="#fbe08a" stroke="#c0902a" stroke-linejoin="round"/><rect x="4.1" y="9" width="0.9" height="2.6" fill="#3a2a00"/></svg>
<svg style="position:absolute;left:965px;top:325px;" width="16" height="15" viewBox="0 0 16 15"><rect x="4.2" y="1" width="4.8" height="4.3" fill="#2a66b0"/><rect x="10" y="1" width="5" height="9.8" fill="#3a78c0"/><rect x="4.2" y="6.2" width="10.8" height="4.6" fill="#3a78c0"/><path d="M4.5 6.5 L8 13.5 H1Z" fill="#fbe08a" stroke="#c0902a" stroke-linejoin="round"/><rect x="4.1" y="9" width="0.9" height="2.6" fill="#3a2a00"/></svg>
<svg style="position:absolute;left:965px;top:348px;" width="16" height="15" viewBox="0 0 16 15"><rect x="4.2" y="1" width="4.8" height="4.3" fill="#2a66b0"/><rect x="10" y="1" width="5" height="9.8" fill="#3a78c0"/><rect x="4.2" y="6.2" width="10.8" height="4.6" fill="#3a78c0"/><path d="M4.5 6.5 L8 13.5 H1Z" fill="#fbe08a" stroke="#c0902a" stroke-linejoin="round"/><rect x="4.1" y="9" width="0.9" height="2.6" fill="#3a2a00"/></svg>
<svg style="position:absolute;left:969px;top:370px;" width="11" height="12" viewBox="0 0 11 12"><path d="M4 0.5 L2.8 11.5 M8.2 0.5 L7 11.5 M0.5 4 H10.5 M0 8 H10" stroke="#2a5a9a" stroke-width="2"/></svg>
<svg style="position:absolute;left:969px;top:395px;" width="10" height="10" viewBox="0 0 10 10"><circle cx="5" cy="5" r="3.2" fill="#4aa84a" stroke="#2a7a2a"/></svg>
<div class="t" style="left:982.5px;top:391px;font-size:9px;line-height:10px;color:#c0002a">S</div>
<svg style="position:absolute;left:967px;top:417px;" width="11" height="11" viewBox="0 0 11 11"><defs><radialGradient id="fi" cx="45%" cy="30%" r="70%"><stop offset="0" stop-color="#8ab4ec"/><stop offset="1" stop-color="#1e4e9a"/></radialGradient></defs><path d="M5.5 1 A4.5 4.5 0 1 0 10 5.5 H5.5Z" fill="url(#fi)" stroke="#1a4a98" stroke-width="0.8"/></svg>
<svg style="position:absolute;left:967px;top:440px;" width="11" height="11" viewBox="0 0 11 11"><defs><radialGradient id="fi" cx="45%" cy="30%" r="70%"><stop offset="0" stop-color="#8ab4ec"/><stop offset="1" stop-color="#1e4e9a"/></radialGradient></defs><circle cx="5.5" cy="5.5" r="4.5" fill="url(#fi)" stroke="#1a4a98" stroke-width="0.8"/></svg>
<svg style="position:absolute;left:967px;top:463px;" width="11" height="11" viewBox="0 0 11 11"><defs><radialGradient id="fi" cx="45%" cy="30%" r="70%"><stop offset="0" stop-color="#8ab4ec"/><stop offset="1" stop-color="#1e4e9a"/></radialGradient></defs><circle cx="5.5" cy="5.5" r="4.5" fill="url(#fi)" stroke="#1a4a98" stroke-width="0.8"/></svg>
<svg style="position:absolute;left:967px;top:486px;" width="11" height="11" viewBox="0 0 11 11"><defs><radialGradient id="fi" cx="45%" cy="30%" r="70%"><stop offset="0" stop-color="#8ab4ec"/><stop offset="1" stop-color="#1e4e9a"/></radialGradient></defs><circle cx="5.5" cy="5.5" r="4.5" fill="url(#fi)" stroke="#1a4a98" stroke-width="0.8"/></svg>
<div class="t" style="left:976px;top:414px;font-size:9px;line-height:10px;color:#c0002a">S</div>
<div class="t" style="left:982.5px;top:412px;font-size:9px;line-height:10px;color:#2a4aa8">c</div>
<div class="t" style="left:982.5px;top:435px;font-size:9px;line-height:10px;color:#c0002a">S</div>
<div class="t" style="left:982.5px;top:458px;font-size:9px;line-height:10px;color:#c0002a">S</div>
<div class="t" style="left:982.5px;top:481px;font-size:9px;line-height:10px;color:#c0002a">S</div>
<svg style="position:absolute;left:21px;top:831px;" width="16" height="14" viewBox="0 0 16 14"><rect x="1.5" y="2.5" width="5" height="10" fill="#e8f0fa" stroke="#8a8a8a"/><rect x="2" y="3" width="4" height="1.5" fill="#4f86c6"/><path d="M11 0.7000000000000002 L11.98 2.52 L13.8 3.5 L11.98 4.4799999999999995 L11 6.3 L10.02 4.4799999999999995 L8.2 3.5 L10.02 2.52Z" fill="#fff8c0" stroke="#c89a20" stroke-width="1"/></svg>
<svg style="position:absolute;left:249px;top:163px;" width="7" height="5" viewBox="0 0 7 5"><path d="M0 4.5 L3.5 0.5 L7 4.5Z" fill="#6e6e6e"/></svg>
<svg style="position:absolute;left:249px;top:790px;" width="7" height="5" viewBox="0 0 7 5"><path d="M0 0.5 L3.5 4.5 L7 0.5Z" fill="#6e6e6e"/></svg>
<svg style="position:absolute;left:13px;top:807px;" width="5" height="7" viewBox="0 0 5 7"><path d="M4.5 0 L0.5 3.5 L4.5 7Z" fill="#8a8a8a"/></svg>
<svg style="position:absolute;left:235px;top:807px;" width="5" height="7" viewBox="0 0 5 7"><path d="M0.5 0 L4.5 3.5 L0.5 7Z" fill="#8a8a8a"/></svg>
<svg style="position:absolute;left:921px;top:131px;" width="7" height="5" viewBox="0 0 7 5"><path d="M0 4.5 L3.5 0.5 L7 4.5Z" fill="#6e6e6e"/></svg>
<svg style="position:absolute;left:921px;top:473px;" width="7" height="5" viewBox="0 0 7 5"><path d="M0 0.5 L3.5 4.5 L7 0.5Z" fill="#6e6e6e"/></svg>
<svg style="position:absolute;left:296px;top:489px;" width="5" height="7" viewBox="0 0 5 7"><path d="M4.5 0 L0.5 3.5 L4.5 7Z" fill="#8a8a8a"/></svg>
<svg style="position:absolute;left:906px;top:489px;" width="5" height="7" viewBox="0 0 5 7"><path d="M0.5 0 L4.5 3.5 L0.5 7Z" fill="#8a8a8a"/></svg>
<svg style="position:absolute;left:1236.5px;top:165px;" width="7" height="5" viewBox="0 0 7 5"><path d="M0 4.5 L3.5 0.5 L7 4.5Z" fill="#6e6e6e"/></svg>
<svg style="position:absolute;left:1236.5px;top:489px;" width="7" height="5" viewBox="0 0 7 5"><path d="M0 0.5 L3.5 4.5 L7 0.5Z" fill="#6e6e6e"/></svg>
<svg style="position:absolute;left:1234px;top:568px;" width="7" height="5" viewBox="0 0 7 5"><path d="M0 4.5 L3.5 0.5 L7 4.5Z" fill="#6e6e6e"/></svg>
<svg style="position:absolute;left:1234px;top:806px;" width="7" height="5" viewBox="0 0 7 5"><path d="M0 0.5 L3.5 4.5 L7 0.5Z" fill="#6e6e6e"/></svg>
<div style="position:absolute;left:1px;top:51px;width:1252px;height:1px;background:#fff"></div>
<div style="position:absolute;left:1px;top:52px;width:1px;height:801px;background:#fbfbfa"></div>
<div style="position:absolute;left:251px;top:691px;width:3px;height:1px;background:#c0bcb8"></div>
<div style="position:absolute;left:251px;top:694px;width:3px;height:1px;background:#c0bcb8"></div>
<div style="position:absolute;left:251px;top:697px;width:3px;height:1px;background:#c0bcb8"></div>
<div style="position:absolute;left:923px;top:151px;width:3px;height:1px;background:#c0bcb8"></div>
<div style="position:absolute;left:923px;top:154px;width:3px;height:1px;background:#c0bcb8"></div>
<div style="position:absolute;left:923px;top:157px;width:3px;height:1px;background:#c0bcb8"></div>
<div style="position:absolute;left:1239px;top:320px;width:3px;height:1px;background:#c0bcb8"></div>
<div style="position:absolute;left:1239px;top:323px;width:3px;height:1px;background:#c0bcb8"></div>
<div style="position:absolute;left:1239px;top:326px;width:3px;height:1px;background:#c0bcb8"></div>
<div style="position:absolute;left:1236px;top:685px;width:3px;height:1px;background:#c0bcb8"></div>
<div style="position:absolute;left:1236px;top:688px;width:3px;height:1px;background:#c0bcb8"></div>
<div style="position:absolute;left:1236px;top:691px;width:3px;height:1px;background:#c0bcb8"></div>
<div style="position:absolute;left:80px;top:809px;width:1px;height:3px;background:#c0bcb8"></div>
<div style="position:absolute;left:83px;top:809px;width:1px;height:3px;background:#c0bcb8"></div>
<div style="position:absolute;left:86px;top:809px;width:1px;height:3px;background:#c0bcb8"></div>
<div style="position:absolute;left:597px;top:491px;width:1px;height:3px;background:#c0bcb8"></div>
<div style="position:absolute;left:600px;top:491px;width:1px;height:3px;background:#c0bcb8"></div>
<div style="position:absolute;left:603px;top:491px;width:1px;height:3px;background:#c0bcb8"></div>
<div style="position:absolute;left:0px;top:854px;width:1254px;height:1px;background:#a6a29e"></div>
<div style="position:absolute;left:0px;top:51px;width:1px;height:804px;background:linear-gradient(#3c3b37,#a6a29e 90px)"></div>
<div style="position:absolute;left:1253px;top:51px;width:1px;height:804px;background:linear-gradient(#3c3b37,#a6a29e 90px)"></div></body></html>
